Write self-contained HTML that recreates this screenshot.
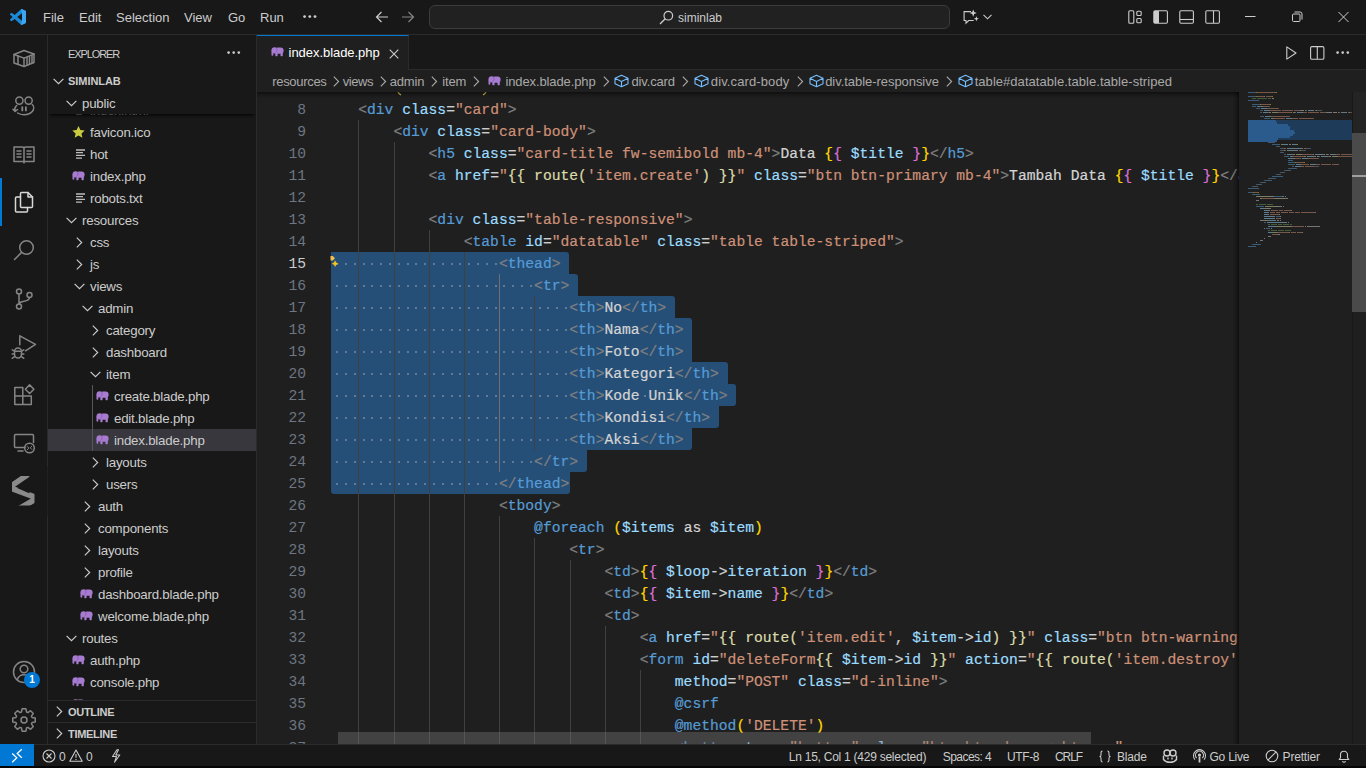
<!DOCTYPE html>
<html><head><meta charset="utf-8">
<style>
*{margin:0;padding:0;box-sizing:border-box}
html,body{width:1366px;height:768px;overflow:hidden;background:#1f1f1f;font-family:"Liberation Sans",sans-serif;color:#cccccc}
.a{position:absolute}
svg{position:absolute;overflow:visible}
#title{position:absolute;left:0;top:0;width:1366px;height:35px;background:#181818;border-bottom:1px solid #2b2b2b}
.menu{position:absolute;top:10px;font-size:13px;color:#cccccc;line-height:15px;white-space:nowrap}
#cmd{position:absolute;left:429px;top:5px;width:521px;height:24px;border:1px solid #3c3c3c;border-radius:6px;background:#212121}
#act{position:absolute;left:0;top:35px;width:48px;height:709px;background:#181818;border-right:1px solid #2b2b2b}
#side{position:absolute;left:48px;top:35px;width:209px;height:709px;background:#181818;border-right:1px solid #2b2b2b;overflow:hidden}
#tabs{position:absolute;left:257px;top:35px;width:1109px;height:35px;background:#181818;border-bottom:1px solid #2b2b2b}
#tab1{position:absolute;left:0;top:0;width:152px;height:35px;background:#1f1f1f;border-top:1px solid #0078d4;border-right:1px solid #2b2b2b}
#crumbs{position:absolute;left:257px;top:70px;width:1109px;height:22px;background:#1f1f1f;font-size:13px;color:#a9a9a9;letter-spacing:0.1px}
.cr{position:absolute;top:4px;line-height:15px;white-space:nowrap}
#editor{position:absolute;left:257px;top:92px;width:1109px;height:652px;background:#1f1f1f;overflow:hidden}
.cl{position:absolute;left:68px;height:22px;line-height:22px;white-space:pre;font-family:"Liberation Mono",monospace;font-size:14.67px;-webkit-text-stroke:0.2px}
.ln{position:absolute;left:0;width:49px;text-align:right;height:22px;line-height:22px;font-family:"Liberation Mono",monospace;font-size:14.67px;color:#6e7681}
.ln.act{color:#cccccc}
.sel{position:absolute;background:#264f78}
.ig{position:absolute;width:1px;background:#404040}
.ws{position:absolute;width:2px;height:2px;background:#5e7a98}
#status{position:absolute;left:0;top:744px;width:1366px;height:22px;background:#181818;border-top:1px solid #2b2b2b;font-size:12px;color:#cccccc}
#blackbar{position:absolute;left:0;top:766px;width:1366px;height:2px;background:#050505}
.si{position:absolute;top:6px;line-height:13px;white-space:nowrap}
.tr{position:absolute;font-size:13.3px;letter-spacing:-0.22px;line-height:22px;height:22px;white-space:nowrap;color:#cccccc}
.hdr{position:absolute;left:0;width:208px;height:22px;border-top:1px solid #2b2b2b;background:#181818}
.mm{position:absolute;height:1px}
</style></head><body>
<!-- ============ TITLE BAR ============ -->
<div id="title">
  <svg style="left:10px;top:9px" width="16" height="16" viewBox="0 0 100 100"><path fill="#1a8ad8" d="M96.46 10.8L75.86.87a6.23 6.23 0 0 0-7.1 1.2L29.35 38.04 12.18 25a4.16 4.16 0 0 0-5.31.24L1.36 30.25a4.16 4.16 0 0 0 0 6.16L16.25 50 1.36 63.58a4.16 4.16 0 0 0 0 6.16l5.51 5.01a4.16 4.16 0 0 0 5.31.24l17.17-13.04 39.41 35.96a6.22 6.22 0 0 0 7.1 1.2l20.6-9.91a6.25 6.25 0 0 0 3.54-5.63V16.43a6.25 6.25 0 0 0-3.54-5.63zM75.02 72.7L45.11 50l29.91-22.7z"/><path fill="#3ca6f0" d="M96.46 10.8L75.86.87a6.23 6.23 0 0 0-7.1 1.2L68.76 2.07 75.02 27.3V72.7L68.76 97.93a6.22 6.22 0 0 0 7.1 1.2l20.6-9.91a6.25 6.25 0 0 0 3.54-5.63V16.43a6.25 6.25 0 0 0-3.54-5.63z"/></svg>
  <div class="menu" style="left:43px">File</div>
  <div class="menu" style="left:79px">Edit</div>
  <div class="menu" style="left:116px">Selection</div>
  <div class="menu" style="left:184px">View</div>
  <div class="menu" style="left:228px">Go</div>
  <div class="menu" style="left:260px">Run</div>
  <svg style="left:303px;top:15px" width="14" height="4"><circle cx="1.6" cy="1.6" r="1.4" fill="#cccccc"/><circle cx="6.8" cy="1.6" r="1.4" fill="#cccccc"/><circle cx="12" cy="1.6" r="1.4" fill="#cccccc"/></svg>
  <!-- back / forward -->
  <svg style="left:375px;top:11px" width="14" height="12" viewBox="0 0 14 12"><path d="M13 6H1.5M6.5 1L1.5 6l5 5" fill="none" stroke="#cccccc" stroke-width="1.2"/></svg>
  <svg style="left:401px;top:11px" width="14" height="12" viewBox="0 0 14 12"><path d="M1 6h11.5M7.5 1l5 5-5 5" fill="none" stroke="#858585" stroke-width="1.2"/></svg>
  <div id="cmd"></div>
  <svg style="left:659px;top:10px" width="15" height="15" viewBox="0 0 15 15"><circle cx="9.3" cy="5.7" r="4.3" fill="none" stroke="#cccccc" stroke-width="1.2"/><path d="M6.2 8.8L1 14" stroke="#cccccc" stroke-width="1.3"/></svg>
  <div class="menu" style="left:678px;top:11px;font-size:12px;color:#cccccc">siminlab</div>
  <!-- copilot chat -->
  <svg style="left:963px;top:9px" width="17" height="16" viewBox="0 0 17 16"><path d="M8 2.6H1.1v8.9h1.9v2.6l2.7-2.6h5" fill="none" stroke="#cccccc" stroke-width="1.1"/><path d="M10.2 0.5l1 2.6 2.6 1-2.6 1-1 2.6-1-2.6-2.6-1 2.6-1z" fill="#cccccc"/><path d="M13.4 7.3l.7 1.8 1.8.7-1.8.7-.7 1.8-.7-1.8-1.8-.7 1.8-.7z" fill="#cccccc"/></svg>
  <svg style="left:983px;top:14px" width="9" height="6" viewBox="0 0 9 6"><path d="M.5 .8l4 4 4-4" fill="none" stroke="#cccccc" stroke-width="1.1"/></svg>
  <!-- layout icons -->
  <svg style="left:1128px;top:10px" width="15" height="14" viewBox="0 0 15 14"><rect x="0.8" y="0.8" width="5" height="12.4" rx="1" fill="none" stroke="#cccccc" stroke-width="1.1"/><rect x="8.8" y="1.3" width="4.4" height="4.2" rx="1" fill="none" stroke="#cccccc" stroke-width="1.1"/><rect x="8.8" y="8.5" width="4.4" height="4.2" rx="1" fill="none" stroke="#cccccc" stroke-width="1.1"/></svg>
  <svg style="left:1153px;top:10px" width="16" height="14" viewBox="0 0 16 14"><rect x="0.8" y="0.8" width="13.6" height="12.4" rx="1.2" fill="none" stroke="#cccccc" stroke-width="1.1"/><rect x="1" y="1" width="5" height="12" fill="#cccccc"/></svg>
  <svg style="left:1179px;top:10px" width="16" height="14" viewBox="0 0 16 14"><rect x="0.8" y="0.8" width="13.6" height="12.4" rx="1.2" fill="none" stroke="#cccccc" stroke-width="1.1"/><path d="M1 9.5h13.4" stroke="#cccccc" stroke-width="1.1"/></svg>
  <svg style="left:1205px;top:10px" width="16" height="14" viewBox="0 0 16 14"><rect x="0.8" y="0.8" width="13.6" height="12.4" rx="1.2" fill="none" stroke="#cccccc" stroke-width="1.1"/><path d="M8.5 1v12" stroke="#cccccc" stroke-width="1.1"/></svg>
  <!-- window controls -->
  <svg style="left:1245px;top:16px" width="11" height="2"><rect x="0" y="0" width="10.5" height="1" fill="#cccccc"/></svg>
  <svg style="left:1292px;top:11px" width="11" height="12" viewBox="0 0 11 12"><rect x="0.5" y="3" width="7.5" height="7.5" rx="1" fill="none" stroke="#cccccc" stroke-width="1"/><path d="M2.5 1h5.5a2 2 0 0 1 2 2v5.5" fill="none" stroke="#cccccc" stroke-width="1"/></svg>
  <svg style="left:1338px;top:12px" width="11" height="10" viewBox="0 0 11 10"><path d="M.5 0L10.5 10M10.5 0L.5 10" stroke="#cccccc" stroke-width="1"/></svg>
</div>

<!-- ============ ACTIVITY BAR ============ -->
<div id="act">
<svg style="left:12.0px;top:11.0px" width="24" height="24" viewBox="0 0 24 24" fill="none" stroke="#858585" stroke-width="1.5" stroke-linejoin="round" stroke-linecap="round"><path d="M2 8.5l10-4 10 3.5v8.5l-10 4-10-3.5z"/><path d="M2 8.5l10 3.6 10-4"/><path d="M12 12.1v8.4"/><path d="M6 10v8M15 11.5v7M17.5 10.5v7M20 9.6v7"/></svg>
<svg style="left:12.0px;top:59.0px" width="24" height="24" viewBox="0 0 24 24" fill="none" stroke="#858585" stroke-width="1.5" stroke-linejoin="round" stroke-linecap="round"><circle cx="7.4" cy="6.6" r="3.6"/><circle cx="16.6" cy="6.6" r="3.6"/><path d="M20.2 10.5c1.8 1.5 2 4.5.3 6.8-1.8 2.4-5 3.4-8.5 3.4-2.6 0-4.8-.6-6.4-1.7"/><path d="M10.3 13.2v3.2M13.9 13.2v3.2" stroke-width="1.8"/><path d="M4.6 11.5c-1.6 1.4-2.3 3.4-1.6 5.6M1 15.2l2.1 2.3 2.4-2"/></svg>
<svg style="left:12.0px;top:108.0px" width="24" height="24" viewBox="0 0 24 24" fill="none" stroke="#858585" stroke-width="1.5" stroke-linejoin="round" stroke-linecap="round"><path d="M2 4h8.5c.9 0 1.5.6 1.5 1.5V20M22 4h-8.5c-.9 0-1.5.6-1.5 1.5M2 4v14.5h10M22 4v14.5H12"/><path d="M5 8h4M5 11h4M5 14h4M15 8h4M15 11h4M15 14h4"/></svg>
<div class="a" style="left:0;top:143px;width:2px;height:48px;background:#0078d4"></div>
<svg style="left:12.0px;top:155.0px" width="24" height="24" viewBox="0 0 24 24" fill="none" stroke="#d7d7d7" stroke-width="1.5" stroke-linejoin="round" stroke-linecap="round"><path d="M9.5 2.5h6.5l4.5 4.5v9.5a1 1 0 0 1-1 1H9.5a1 1 0 0 1-1-1v-13a1 1 0 0 1 1-1z"/><path d="M16 2.5V7h4.5"/><path d="M8.5 7H4.5a1 1 0 0 0-1 1v13a1 1 0 0 0 1 1h10a1 1 0 0 0 1-1v-3.5"/></svg>
<svg style="left:12.0px;top:203.0px" width="24" height="24" viewBox="0 0 24 24" fill="none" stroke="#858585" stroke-width="1.5" stroke-linejoin="round" stroke-linecap="round"><circle cx="14.5" cy="9.5" r="6.8"/><path d="M9.6 14.4L2.5 21.5"/></svg>
<svg style="left:12.0px;top:252.0px" width="24" height="24" viewBox="0 0 24 24" fill="none" stroke="#858585" stroke-width="1.5" stroke-linejoin="round" stroke-linecap="round"><circle cx="7" cy="4.5" r="2.5"/><circle cx="7" cy="19.5" r="2.5"/><circle cx="17.5" cy="8" r="2.5"/><path d="M7 7v10M17.5 10.5c0 3-3 3.5-6.5 4S7.5 16 7.5 17"/></svg>
<svg style="left:12.0px;top:300.0px" width="24" height="24" viewBox="0 0 24 24" fill="none" stroke="#858585" stroke-width="1.5" stroke-linejoin="round" stroke-linecap="round"><path d="M7.8 0.8v9M7.8 0.8l15.7 8.5-10 6.5"/><path d="M2.5 16.5c0-2 1.6-3.6 3.5-3.6s3.5 1.6 3.5 3.6v2.8c0 2-1.6 3.6-3.5 3.6s-3.5-1.6-3.5-3.6z"/><path d="M2.5 16.3h7M0.2 14.8l2.3 1.3M11.8 14.8l-2.3 1.3M0.2 19h2.3M9.5 19h2.3M0.2 23.3l2.3-1.7M11.8 23.3l-2.3-1.7"/></svg>
<svg style="left:12.0px;top:348.0px" width="24" height="24" viewBox="0 0 24 24" fill="none" stroke="#858585" stroke-width="1.5" stroke-linejoin="round" stroke-linecap="round"><path d="M2.8 4.5h8v8.5h-8zM2.8 13h8v8.5h-8zM10.8 13h8.5v8.5h-8.5z"/><path d="M13.3 6.2l4.3-4.3 4.3 4.3-4.3 4.3z"/></svg>
<svg style="left:12.0px;top:396.0px" width="24" height="24" viewBox="0 0 24 24" fill="none" stroke="#858585" stroke-width="1.5" stroke-linejoin="round" stroke-linecap="round"><path d="M13 16.5H3.5a1 1 0 0 1-1-1v-11a1 1 0 0 1 1-1h17a1 1 0 0 1 1 1v7"/><path d="M6 20h5"/><circle cx="17.5" cy="17" r="4.8"/><path d="M15.3 15.5l1.6 1.6-1.6 1.6M19.8 15.2l-1.6 1.6 1.6 1.6" stroke-width="1"/></svg>
<svg style="left:0;top:0" width="48" height="709"><g transform="translate(0,-35)"><path d="M28 474.5L9 487.5 37.5 498 17 510" fill="none" stroke="#8a8a8a" stroke-width="5.6" stroke-linejoin="miter" stroke-miterlimit="4"/><path d="M18 487.5L29.5 492.5" stroke="#181818" stroke-width="1.4"/><rect x="0" y="466" width="12" height="50" fill="#181818"/><rect x="34.5" y="466" width="13" height="50" fill="#181818"/><rect x="0" y="462" width="47" height="14" fill="#181818"/><rect x="0" y="505.5" width="47" height="12" fill="#181818"/></g></svg>
<svg style="left:12.0px;top:625.0px" width="24" height="24" viewBox="0 0 24 24" fill="none" stroke="#858585" stroke-width="1.5" stroke-linejoin="round" stroke-linecap="round"><circle cx="12" cy="12" r="10.5"/><circle cx="12" cy="9" r="3.8"/><path d="M5.3 19.8c1-3.3 3.5-5 6.7-5s5.7 1.7 6.7 5"/></svg>
<div class="a" style="left:24px;top:637px;width:16px;height:16px;border-radius:8px;background:#0078d4;color:#fff;font-size:10px;font-weight:bold;line-height:16px;text-align:center">1</div>
<svg style="left:12.0px;top:673.0px" width="24" height="24" viewBox="0 0 24 24" fill="none" stroke="#858585" stroke-width="1.5" stroke-linejoin="round" stroke-linecap="round"><path d="M23.24 10.07 L23.24 13.93 L20.02 14.48 L19.43 15.92 L21.31 18.58 L18.58 21.31 L15.92 19.43 L14.48 20.02 L13.93 23.24 L10.07 23.24 L9.52 20.02 L8.08 19.43 L5.42 21.31 L2.69 18.58 L4.57 15.92 L3.98 14.48 L0.76 13.93 L0.76 10.07 L3.98 9.52 L4.57 8.08 L2.69 5.42 L5.42 2.69 L8.08 4.57 L9.52 3.98 L10.07 0.76 L13.93 0.76 L14.48 3.98 L15.92 4.57 L18.58 2.69 L21.31 5.42 L19.43 8.08 L20.02 9.52z"/><circle cx="12" cy="12" r="3"/></svg>
</div>

<!-- ============ SIDEBAR ============ -->
<div id="side">
<div class="a" style="left:20px;top:13px;font-size:11px;line-height:13px;color:#cccccc;letter-spacing:-1.1px">EXPLORER</div>
<svg style="left:179px;top:16px" width="14" height="4"><circle cx="1.6" cy="1.6" r="1.3" fill="#cccccc"/><circle cx="6.7" cy="1.6" r="1.3" fill="#cccccc"/><circle cx="11.8" cy="1.6" r="1.3" fill="#cccccc"/></svg>
<svg style="left:5.0px;top:43.0px" width="11" height="7" viewBox="0 0 11 7"><path d="M.6 .8L5.5 5.7 10.4 .8" fill="none" stroke="#cccccc" stroke-width="1.15"/></svg>
<div class="a" style="left:20px;top:40px;font-size:11px;line-height:13px;font-weight:bold;color:#cccccc;letter-spacing:-0.05px">SIMINLAB</div>
<div class="a" style="left:0;top:394px;width:208px;height:22px;background:#37373d"></div>
<div class="a" style="left:44px;top:350px;width:1px;height:66px;background:#585858"></div>
<svg style="left:27.5px;top:69.5px" width="10" height="10" viewBox="0 0 10 10"><path d="M0 1h9M0 3.7h7M0 6.4h9M0 9.1h6" stroke="#bdbdbd" stroke-width="1.3"/></svg>
<div class="tr" style="left:42.0px;top:65px;color:#cccccc">index.html</div>
<svg style="left:24.0px;top:91.0px" width="13" height="12" viewBox="0 0 13 12"><path fill="#cbcb41" d="M6.5 0l1.9 4 4.3.5-3.2 2.9.9 4.3-3.9-2.2-3.8 2.2.9-4.3L.3 4.5 4.6 4z"/></svg>
<div class="tr" style="left:42.0px;top:87px;color:#cccccc">favicon.ico</div>
<svg style="left:27.5px;top:113.5px" width="10" height="10" viewBox="0 0 10 10"><path d="M0 1h9M0 3.7h7M0 6.4h9M0 9.1h6" stroke="#bdbdbd" stroke-width="1.3"/></svg>
<div class="tr" style="left:42.0px;top:109px;color:#cccccc">hot</div>
<svg style="left:23.5px;top:136px" width="13" height="10" viewBox="0 0 13 10"><g fill="#a77bd0"><circle cx="3.6" cy="3.3" r="3.1"/><rect x="4" y="0.6" width="8.6" height="6.2" rx="3"/><rect x="4.3" y="5" width="2.3" height="4.2" rx="0.6"/><rect x="9.5" y="5" width="2.3" height="4.2" rx="0.6"/><rect x="0.5" y="3.6" width="1.8" height="5.2" rx="0.8"/></g><path d="M5.6 1.2c.9 1.4.6 3.2-1.1 4.3" stroke="#7c58a6" stroke-width="0.8" fill="none"/></svg>
<div class="tr" style="left:42.0px;top:131px;color:#cccccc">index.php</div>
<svg style="left:27.5px;top:157.5px" width="10" height="10" viewBox="0 0 10 10"><path d="M0 1h9M0 3.7h7M0 6.4h9M0 9.1h6" stroke="#bdbdbd" stroke-width="1.3"/></svg>
<div class="tr" style="left:42.0px;top:153px;color:#cccccc">robots.txt</div>
<svg style="left:18.0px;top:182.0px" width="11" height="7" viewBox="0 0 11 7"><path d="M.6 .8L5.5 5.7 10.4 .8" fill="none" stroke="#cccccc" stroke-width="1.15"/></svg>
<div class="tr" style="left:34.0px;top:175px;color:#cccccc">resources</div>
<svg style="left:27.8px;top:202.0px" width="7" height="11" viewBox="0 0 7 11"><path d="M.8 .6L5.7 5.5 .8 10.4" fill="none" stroke="#cccccc" stroke-width="1.15"/></svg>
<div class="tr" style="left:42.0px;top:197px;color:#cccccc">css</div>
<svg style="left:27.8px;top:224.0px" width="7" height="11" viewBox="0 0 7 11"><path d="M.8 .6L5.7 5.5 .8 10.4" fill="none" stroke="#cccccc" stroke-width="1.15"/></svg>
<div class="tr" style="left:42.0px;top:219px;color:#cccccc">js</div>
<svg style="left:26.0px;top:248.0px" width="11" height="7" viewBox="0 0 11 7"><path d="M.6 .8L5.5 5.7 10.4 .8" fill="none" stroke="#cccccc" stroke-width="1.15"/></svg>
<div class="tr" style="left:42.0px;top:241px;color:#cccccc">views</div>
<svg style="left:34.0px;top:270.0px" width="11" height="7" viewBox="0 0 11 7"><path d="M.6 .8L5.5 5.7 10.4 .8" fill="none" stroke="#cccccc" stroke-width="1.15"/></svg>
<div class="tr" style="left:50.0px;top:263px;color:#cccccc">admin</div>
<svg style="left:43.8px;top:290.0px" width="7" height="11" viewBox="0 0 7 11"><path d="M.8 .6L5.7 5.5 .8 10.4" fill="none" stroke="#cccccc" stroke-width="1.15"/></svg>
<div class="tr" style="left:58.0px;top:285px;color:#cccccc">category</div>
<svg style="left:43.8px;top:312.0px" width="7" height="11" viewBox="0 0 7 11"><path d="M.8 .6L5.7 5.5 .8 10.4" fill="none" stroke="#cccccc" stroke-width="1.15"/></svg>
<div class="tr" style="left:58.0px;top:307px;color:#cccccc">dashboard</div>
<svg style="left:42.0px;top:336.0px" width="11" height="7" viewBox="0 0 11 7"><path d="M.6 .8L5.5 5.7 10.4 .8" fill="none" stroke="#cccccc" stroke-width="1.15"/></svg>
<div class="tr" style="left:58.0px;top:329px;color:#cccccc">item</div>
<svg style="left:47.5px;top:356px" width="13" height="10" viewBox="0 0 13 10"><g fill="#a77bd0"><circle cx="3.6" cy="3.3" r="3.1"/><rect x="4" y="0.6" width="8.6" height="6.2" rx="3"/><rect x="4.3" y="5" width="2.3" height="4.2" rx="0.6"/><rect x="9.5" y="5" width="2.3" height="4.2" rx="0.6"/><rect x="0.5" y="3.6" width="1.8" height="5.2" rx="0.8"/></g><path d="M5.6 1.2c.9 1.4.6 3.2-1.1 4.3" stroke="#7c58a6" stroke-width="0.8" fill="none"/></svg>
<div class="tr" style="left:66.0px;top:351px;color:#cccccc">create.blade.php</div>
<svg style="left:47.5px;top:378px" width="13" height="10" viewBox="0 0 13 10"><g fill="#a77bd0"><circle cx="3.6" cy="3.3" r="3.1"/><rect x="4" y="0.6" width="8.6" height="6.2" rx="3"/><rect x="4.3" y="5" width="2.3" height="4.2" rx="0.6"/><rect x="9.5" y="5" width="2.3" height="4.2" rx="0.6"/><rect x="0.5" y="3.6" width="1.8" height="5.2" rx="0.8"/></g><path d="M5.6 1.2c.9 1.4.6 3.2-1.1 4.3" stroke="#7c58a6" stroke-width="0.8" fill="none"/></svg>
<div class="tr" style="left:66.0px;top:373px;color:#cccccc">edit.blade.php</div>
<svg style="left:47.5px;top:400px" width="13" height="10" viewBox="0 0 13 10"><g fill="#a77bd0"><circle cx="3.6" cy="3.3" r="3.1"/><rect x="4" y="0.6" width="8.6" height="6.2" rx="3"/><rect x="4.3" y="5" width="2.3" height="4.2" rx="0.6"/><rect x="9.5" y="5" width="2.3" height="4.2" rx="0.6"/><rect x="0.5" y="3.6" width="1.8" height="5.2" rx="0.8"/></g><path d="M5.6 1.2c.9 1.4.6 3.2-1.1 4.3" stroke="#7c58a6" stroke-width="0.8" fill="none"/></svg>
<div class="tr" style="left:66.0px;top:395px;color:#cccccc">index.blade.php</div>
<svg style="left:43.8px;top:422.0px" width="7" height="11" viewBox="0 0 7 11"><path d="M.8 .6L5.7 5.5 .8 10.4" fill="none" stroke="#cccccc" stroke-width="1.15"/></svg>
<div class="tr" style="left:58.0px;top:417px;color:#cccccc">layouts</div>
<svg style="left:43.8px;top:444.0px" width="7" height="11" viewBox="0 0 7 11"><path d="M.8 .6L5.7 5.5 .8 10.4" fill="none" stroke="#cccccc" stroke-width="1.15"/></svg>
<div class="tr" style="left:58.0px;top:439px;color:#cccccc">users</div>
<svg style="left:35.8px;top:466.0px" width="7" height="11" viewBox="0 0 7 11"><path d="M.8 .6L5.7 5.5 .8 10.4" fill="none" stroke="#cccccc" stroke-width="1.15"/></svg>
<div class="tr" style="left:50.0px;top:461px;color:#cccccc">auth</div>
<svg style="left:35.8px;top:488.0px" width="7" height="11" viewBox="0 0 7 11"><path d="M.8 .6L5.7 5.5 .8 10.4" fill="none" stroke="#cccccc" stroke-width="1.15"/></svg>
<div class="tr" style="left:50.0px;top:483px;color:#cccccc">components</div>
<svg style="left:35.8px;top:510.0px" width="7" height="11" viewBox="0 0 7 11"><path d="M.8 .6L5.7 5.5 .8 10.4" fill="none" stroke="#cccccc" stroke-width="1.15"/></svg>
<div class="tr" style="left:50.0px;top:505px;color:#cccccc">layouts</div>
<svg style="left:35.8px;top:532.0px" width="7" height="11" viewBox="0 0 7 11"><path d="M.8 .6L5.7 5.5 .8 10.4" fill="none" stroke="#cccccc" stroke-width="1.15"/></svg>
<div class="tr" style="left:50.0px;top:527px;color:#cccccc">profile</div>
<svg style="left:31.5px;top:554px" width="13" height="10" viewBox="0 0 13 10"><g fill="#a77bd0"><circle cx="3.6" cy="3.3" r="3.1"/><rect x="4" y="0.6" width="8.6" height="6.2" rx="3"/><rect x="4.3" y="5" width="2.3" height="4.2" rx="0.6"/><rect x="9.5" y="5" width="2.3" height="4.2" rx="0.6"/><rect x="0.5" y="3.6" width="1.8" height="5.2" rx="0.8"/></g><path d="M5.6 1.2c.9 1.4.6 3.2-1.1 4.3" stroke="#7c58a6" stroke-width="0.8" fill="none"/></svg>
<div class="tr" style="left:50.0px;top:549px;color:#cccccc">dashboard.blade.php</div>
<svg style="left:31.5px;top:576px" width="13" height="10" viewBox="0 0 13 10"><g fill="#a77bd0"><circle cx="3.6" cy="3.3" r="3.1"/><rect x="4" y="0.6" width="8.6" height="6.2" rx="3"/><rect x="4.3" y="5" width="2.3" height="4.2" rx="0.6"/><rect x="9.5" y="5" width="2.3" height="4.2" rx="0.6"/><rect x="0.5" y="3.6" width="1.8" height="5.2" rx="0.8"/></g><path d="M5.6 1.2c.9 1.4.6 3.2-1.1 4.3" stroke="#7c58a6" stroke-width="0.8" fill="none"/></svg>
<div class="tr" style="left:50.0px;top:571px;color:#cccccc">welcome.blade.php</div>
<svg style="left:18.0px;top:600.0px" width="11" height="7" viewBox="0 0 11 7"><path d="M.6 .8L5.5 5.7 10.4 .8" fill="none" stroke="#cccccc" stroke-width="1.15"/></svg>
<div class="tr" style="left:34.0px;top:593px;color:#cccccc">routes</div>
<svg style="left:23.5px;top:620px" width="13" height="10" viewBox="0 0 13 10"><g fill="#a77bd0"><circle cx="3.6" cy="3.3" r="3.1"/><rect x="4" y="0.6" width="8.6" height="6.2" rx="3"/><rect x="4.3" y="5" width="2.3" height="4.2" rx="0.6"/><rect x="9.5" y="5" width="2.3" height="4.2" rx="0.6"/><rect x="0.5" y="3.6" width="1.8" height="5.2" rx="0.8"/></g><path d="M5.6 1.2c.9 1.4.6 3.2-1.1 4.3" stroke="#7c58a6" stroke-width="0.8" fill="none"/></svg>
<div class="tr" style="left:42.0px;top:615px;color:#cccccc">auth.php</div>
<svg style="left:23.5px;top:642px" width="13" height="10" viewBox="0 0 13 10"><g fill="#a77bd0"><circle cx="3.6" cy="3.3" r="3.1"/><rect x="4" y="0.6" width="8.6" height="6.2" rx="3"/><rect x="4.3" y="5" width="2.3" height="4.2" rx="0.6"/><rect x="9.5" y="5" width="2.3" height="4.2" rx="0.6"/><rect x="0.5" y="3.6" width="1.8" height="5.2" rx="0.8"/></g><path d="M5.6 1.2c.9 1.4.6 3.2-1.1 4.3" stroke="#7c58a6" stroke-width="0.8" fill="none"/></svg>
<div class="tr" style="left:42.0px;top:637px;color:#cccccc">console.php</div>
<svg style="left:23.5px;top:664px" width="13" height="10" viewBox="0 0 13 10"><g fill="#a77bd0"><circle cx="3.6" cy="3.3" r="3.1"/><rect x="4" y="0.6" width="8.6" height="6.2" rx="3"/><rect x="4.3" y="5" width="2.3" height="4.2" rx="0.6"/><rect x="9.5" y="5" width="2.3" height="4.2" rx="0.6"/><rect x="0.5" y="3.6" width="1.8" height="5.2" rx="0.8"/></g><path d="M5.6 1.2c.9 1.4.6 3.2-1.1 4.3" stroke="#7c58a6" stroke-width="0.8" fill="none"/></svg>
<div class="tr" style="left:42.0px;top:659px;color:#cccccc">web.php</div>
<div class="a" style="left:0;top:57px;width:208px;height:22px;background:#181818;box-shadow:0 3px 3px -2px #000"></div>
<svg style="left:18.0px;top:65.0px" width="11" height="7" viewBox="0 0 11 7"><path d="M.6 .8L5.5 5.7 10.4 .8" fill="none" stroke="#cccccc" stroke-width="1.15"/></svg>
<div class="tr" style="left:34.0px;top:58px;">public</div>
<div class="hdr" style="top:665px"></div>
<svg style="left:8.0px;top:671.0px" width="7" height="11" viewBox="0 0 7 11"><path d="M.8 .6L5.7 5.5 .8 10.4" fill="none" stroke="#cccccc" stroke-width="1.15"/></svg>
<div class="a" style="left:20px;top:671px;font-size:11px;line-height:13px;font-weight:bold;color:#cccccc;letter-spacing:-0.3px">OUTLINE</div>
<div class="hdr" style="top:687px;height:22px"></div>
<svg style="left:8.0px;top:693.0px" width="7" height="11" viewBox="0 0 7 11"><path d="M.8 .6L5.7 5.5 .8 10.4" fill="none" stroke="#cccccc" stroke-width="1.15"/></svg>
<div class="a" style="left:20px;top:693px;font-size:11px;line-height:13px;font-weight:bold;color:#cccccc;letter-spacing:-0.3px">TIMELINE</div>
</div>

<!-- ============ TABS ============ -->
<div id="tabs">
  <div id="tab1">
    <svg style="left:13.9px;top:11px" width="13" height="10" viewBox="0 0 13 10"><g fill="#a77bd0"><circle cx="3.6" cy="3.3" r="3.1"/><rect x="4" y="0.6" width="8.6" height="6.2" rx="3"/><rect x="4.3" y="5" width="2.3" height="4.2" rx="0.6"/><rect x="9.5" y="5" width="2.3" height="4.2" rx="0.6"/><rect x="0.5" y="3.6" width="1.8" height="5.2" rx="0.8"/></g><path d="M5.6 1.2c.9 1.4.6 3.2-1.1 4.3" stroke="#7c58a6" stroke-width="0.8" fill="none"/></svg>
    <span class="a" style="left:31.6px;top:9px;font-size:13px;line-height:15px;color:#ffffff;letter-spacing:-0.05px">index.blade.php</span>
    <svg style="left:132px;top:13px" width="10" height="10" viewBox="0 0 10 10"><path d="M.7 .7l8.6 8.6M9.3 .7L.7 9.3" stroke="#cccccc" stroke-width="1.1"/></svg>
  </div>
  <svg style="left:1029px;top:11px" width="11" height="14" viewBox="0 0 11 14"><path d="M.8 .9v12.2L10 7z" fill="none" stroke="#cccccc" stroke-width="1.1" stroke-linejoin="round"/></svg>
  <svg style="left:1053px;top:11px" width="15" height="14" viewBox="0 0 15 14"><rect x="0.6" y="0.6" width="13.3" height="12.6" rx="1.3" fill="none" stroke="#cccccc" stroke-width="1.1"/><path d="M7.3 1v12" stroke="#cccccc" stroke-width="1.1"/></svg>
  <svg style="left:1079px;top:16px" width="14" height="4"><circle cx="1.6" cy="1.6" r="1.3" fill="#cccccc"/><circle cx="6.7" cy="1.6" r="1.3" fill="#cccccc"/><circle cx="11.8" cy="1.6" r="1.3" fill="#cccccc"/></svg>
</div>

<!-- ============ BREADCRUMBS ============ -->
<div id="crumbs">
<div class="cr" style="left:15.2px;letter-spacing:-0.3px">resources</div>
<svg style="left:75.8px;top:6px" width="7" height="11" viewBox="0 0 7 11"><path d="M.8 .7L5.6 5.5 .8 10.3" fill="none" stroke="#a9a9a9" stroke-width="1.1"/></svg>
<div class="cr" style="left:85.8px;letter-spacing:-0.45px">views</div>
<svg style="left:122.6px;top:6px" width="7" height="11" viewBox="0 0 7 11"><path d="M.8 .7L5.6 5.5 .8 10.3" fill="none" stroke="#a9a9a9" stroke-width="1.1"/></svg>
<div class="cr" style="left:132.8px;letter-spacing:-0.2px">admin</div>
<svg style="left:174.0px;top:6px" width="7" height="11" viewBox="0 0 7 11"><path d="M.8 .7L5.6 5.5 .8 10.3" fill="none" stroke="#a9a9a9" stroke-width="1.1"/></svg>
<div class="cr" style="left:185.2px;letter-spacing:-0.1px">item</div>
<svg style="left:215.5px;top:6px" width="7" height="11" viewBox="0 0 7 11"><path d="M.8 .7L5.6 5.5 .8 10.3" fill="none" stroke="#a9a9a9" stroke-width="1.1"/></svg>
<svg style="left:231px;top:5.5px" width="13" height="10" viewBox="0 0 13 10"><g fill="#a77bd0"><circle cx="3.6" cy="3.3" r="3.1"/><rect x="4" y="0.6" width="8.6" height="6.2" rx="3"/><rect x="4.3" y="5" width="2.3" height="4.2" rx="0.6"/><rect x="9.5" y="5" width="2.3" height="4.2" rx="0.6"/><rect x="0.5" y="3.6" width="1.8" height="5.2" rx="0.8"/></g><path d="M5.6 1.2c.9 1.4.6 3.2-1.1 4.3" stroke="#7c58a6" stroke-width="0.8" fill="none"/></svg>
<div class="cr" style="left:248.4px;letter-spacing:-0.11px">index.blade.php</div>
<svg style="left:345.5px;top:6px" width="7" height="11" viewBox="0 0 7 11"><path d="M.8 .7L5.6 5.5 .8 10.3" fill="none" stroke="#a9a9a9" stroke-width="1.1"/></svg>
<svg style="left:357.0px;top:4px" width="15" height="14" viewBox="0 0 15 14"><path d="M1 4.3L7.5 1.2 14 4.3v5.4L7.5 12.8 1 9.7z M1 4.3l6.5 3.1L14 4.3 M7.5 7.4v5.4" fill="none" stroke="#75beff" stroke-width="1.1" stroke-linejoin="round"/></svg>
<div class="cr" style="left:374.5px;letter-spacing:-0.16px">div.card</div>
<svg style="left:424.5px;top:6px" width="7" height="11" viewBox="0 0 7 11"><path d="M.8 .7L5.6 5.5 .8 10.3" fill="none" stroke="#a9a9a9" stroke-width="1.1"/></svg>
<svg style="left:436.5px;top:4px" width="15" height="14" viewBox="0 0 15 14"><path d="M1 4.3L7.5 1.2 14 4.3v5.4L7.5 12.8 1 9.7z M1 4.3l6.5 3.1L14 4.3 M7.5 7.4v5.4" fill="none" stroke="#75beff" stroke-width="1.1" stroke-linejoin="round"/></svg>
<div class="cr" style="left:453.8px;letter-spacing:0.12px">div.card-body</div>
<svg style="left:539.5px;top:6px" width="7" height="11" viewBox="0 0 7 11"><path d="M.8 .7L5.6 5.5 .8 10.3" fill="none" stroke="#a9a9a9" stroke-width="1.1"/></svg>
<svg style="left:551.5px;top:4px" width="15" height="14" viewBox="0 0 15 14"><path d="M1 4.3L7.5 1.2 14 4.3v5.4L7.5 12.8 1 9.7z M1 4.3l6.5 3.1L14 4.3 M7.5 7.4v5.4" fill="none" stroke="#75beff" stroke-width="1.1" stroke-linejoin="round"/></svg>
<div class="cr" style="left:568.2px;letter-spacing:-0.05px">div.table-responsive</div>
<svg style="left:689.0px;top:6px" width="7" height="11" viewBox="0 0 7 11"><path d="M.8 .7L5.6 5.5 .8 10.3" fill="none" stroke="#a9a9a9" stroke-width="1.1"/></svg>
<svg style="left:701.4px;top:4px" width="15" height="14" viewBox="0 0 15 14"><path d="M1 4.3L7.5 1.2 14 4.3v5.4L7.5 12.8 1 9.7z M1 4.3l6.5 3.1L14 4.3 M7.5 7.4v5.4" fill="none" stroke="#75beff" stroke-width="1.1" stroke-linejoin="round"/></svg>
<div class="cr" style="left:717.7px;letter-spacing:0.04px">table#datatable.table.table-striped</div>
</div>

<!-- ============ EDITOR ============ -->
<div id="editor">
<div class="sel" style="left:74px;top:160px;width:238.1px;height:22px;border-radius:0 3px 0 0"></div>
<div class="sel" style="left:74px;top:182px;width:246.9px;height:22px;border-radius:0 3px 0 0"></div>
<div class="sel" style="left:74px;top:204px;width:343.7px;height:22px;border-radius:0 3px 0 0"></div>
<div class="sel" style="left:74px;top:226px;width:361.3px;height:22px;border-radius:0 3px 0 0"></div>
<div class="sel" style="left:74px;top:248px;width:361.3px;height:22px;border-radius:0 0 0 0"></div>
<div class="sel" style="left:74px;top:270px;width:396.5px;height:22px;border-radius:0 3px 0 0"></div>
<div class="sel" style="left:74px;top:292px;width:405.3px;height:22px;border-radius:0 3px 3px 0"></div>
<div class="sel" style="left:74px;top:314px;width:387.7px;height:22px;border-radius:0 0 3px 0"></div>
<div class="sel" style="left:74px;top:336px;width:361.3px;height:22px;border-radius:0 0 3px 0"></div>
<div class="sel" style="left:74px;top:358px;width:255.7px;height:22px;border-radius:0 0 3px 0"></div>
<div class="sel" style="left:74px;top:380px;width:239.4px;height:22px;border-radius:0 0 3px 3px"></div>
<div class="ig" style="left:101.4px;top:28px;height:638px;background:#404040"></div>
<div class="ig" style="left:136.6px;top:50px;height:616px;background:#404040"></div>
<div class="ig" style="left:171.8px;top:138px;height:528px;background:#404040"></div>
<div class="ig" style="left:207.0px;top:160px;height:506px;background:#404040"></div>
<div class="ig" style="left:242.2px;top:182px;height:198px;background:#707070"></div>
<div class="ig" style="left:242.2px;top:424px;height:242px;background:#404040"></div>
<div class="ig" style="left:277.4px;top:204px;height:154px;background:#404040"></div>
<div class="ig" style="left:277.4px;top:446px;height:220px;background:#404040"></div>
<div class="ig" style="left:312.6px;top:468px;height:198px;background:#404040"></div>
<div class="ig" style="left:347.8px;top:534px;height:132px;background:#404040"></div>
<div class="ig" style="left:383.0px;top:578px;height:88px;background:#404040"></div>
<div class="ws" style="left:79.2px;top:171px"></div>
<div class="ws" style="left:88.0px;top:171px"></div>
<div class="ws" style="left:96.8px;top:171px"></div>
<div class="ws" style="left:105.6px;top:171px"></div>
<div class="ws" style="left:114.4px;top:171px"></div>
<div class="ws" style="left:123.2px;top:171px"></div>
<div class="ws" style="left:132.0px;top:171px"></div>
<div class="ws" style="left:140.8px;top:171px"></div>
<div class="ws" style="left:149.6px;top:171px"></div>
<div class="ws" style="left:158.4px;top:171px"></div>
<div class="ws" style="left:167.2px;top:171px"></div>
<div class="ws" style="left:176.0px;top:171px"></div>
<div class="ws" style="left:184.8px;top:171px"></div>
<div class="ws" style="left:193.6px;top:171px"></div>
<div class="ws" style="left:202.4px;top:171px"></div>
<div class="ws" style="left:211.2px;top:171px"></div>
<div class="ws" style="left:220.0px;top:171px"></div>
<div class="ws" style="left:228.8px;top:171px"></div>
<div class="ws" style="left:237.6px;top:171px"></div>
<div class="ws" style="left:79.2px;top:193px"></div>
<div class="ws" style="left:88.0px;top:193px"></div>
<div class="ws" style="left:96.8px;top:193px"></div>
<div class="ws" style="left:105.6px;top:193px"></div>
<div class="ws" style="left:114.4px;top:193px"></div>
<div class="ws" style="left:123.2px;top:193px"></div>
<div class="ws" style="left:132.0px;top:193px"></div>
<div class="ws" style="left:140.8px;top:193px"></div>
<div class="ws" style="left:149.6px;top:193px"></div>
<div class="ws" style="left:158.4px;top:193px"></div>
<div class="ws" style="left:167.2px;top:193px"></div>
<div class="ws" style="left:176.0px;top:193px"></div>
<div class="ws" style="left:184.8px;top:193px"></div>
<div class="ws" style="left:193.6px;top:193px"></div>
<div class="ws" style="left:202.4px;top:193px"></div>
<div class="ws" style="left:211.2px;top:193px"></div>
<div class="ws" style="left:220.0px;top:193px"></div>
<div class="ws" style="left:228.8px;top:193px"></div>
<div class="ws" style="left:237.6px;top:193px"></div>
<div class="ws" style="left:246.4px;top:193px"></div>
<div class="ws" style="left:255.2px;top:193px"></div>
<div class="ws" style="left:264.0px;top:193px"></div>
<div class="ws" style="left:272.8px;top:193px"></div>
<div class="ws" style="left:79.2px;top:215px"></div>
<div class="ws" style="left:88.0px;top:215px"></div>
<div class="ws" style="left:96.8px;top:215px"></div>
<div class="ws" style="left:105.6px;top:215px"></div>
<div class="ws" style="left:114.4px;top:215px"></div>
<div class="ws" style="left:123.2px;top:215px"></div>
<div class="ws" style="left:132.0px;top:215px"></div>
<div class="ws" style="left:140.8px;top:215px"></div>
<div class="ws" style="left:149.6px;top:215px"></div>
<div class="ws" style="left:158.4px;top:215px"></div>
<div class="ws" style="left:167.2px;top:215px"></div>
<div class="ws" style="left:176.0px;top:215px"></div>
<div class="ws" style="left:184.8px;top:215px"></div>
<div class="ws" style="left:193.6px;top:215px"></div>
<div class="ws" style="left:202.4px;top:215px"></div>
<div class="ws" style="left:211.2px;top:215px"></div>
<div class="ws" style="left:220.0px;top:215px"></div>
<div class="ws" style="left:228.8px;top:215px"></div>
<div class="ws" style="left:237.6px;top:215px"></div>
<div class="ws" style="left:246.4px;top:215px"></div>
<div class="ws" style="left:255.2px;top:215px"></div>
<div class="ws" style="left:264.0px;top:215px"></div>
<div class="ws" style="left:272.8px;top:215px"></div>
<div class="ws" style="left:281.6px;top:215px"></div>
<div class="ws" style="left:290.4px;top:215px"></div>
<div class="ws" style="left:299.2px;top:215px"></div>
<div class="ws" style="left:308.0px;top:215px"></div>
<div class="ws" style="left:79.2px;top:237px"></div>
<div class="ws" style="left:88.0px;top:237px"></div>
<div class="ws" style="left:96.8px;top:237px"></div>
<div class="ws" style="left:105.6px;top:237px"></div>
<div class="ws" style="left:114.4px;top:237px"></div>
<div class="ws" style="left:123.2px;top:237px"></div>
<div class="ws" style="left:132.0px;top:237px"></div>
<div class="ws" style="left:140.8px;top:237px"></div>
<div class="ws" style="left:149.6px;top:237px"></div>
<div class="ws" style="left:158.4px;top:237px"></div>
<div class="ws" style="left:167.2px;top:237px"></div>
<div class="ws" style="left:176.0px;top:237px"></div>
<div class="ws" style="left:184.8px;top:237px"></div>
<div class="ws" style="left:193.6px;top:237px"></div>
<div class="ws" style="left:202.4px;top:237px"></div>
<div class="ws" style="left:211.2px;top:237px"></div>
<div class="ws" style="left:220.0px;top:237px"></div>
<div class="ws" style="left:228.8px;top:237px"></div>
<div class="ws" style="left:237.6px;top:237px"></div>
<div class="ws" style="left:246.4px;top:237px"></div>
<div class="ws" style="left:255.2px;top:237px"></div>
<div class="ws" style="left:264.0px;top:237px"></div>
<div class="ws" style="left:272.8px;top:237px"></div>
<div class="ws" style="left:281.6px;top:237px"></div>
<div class="ws" style="left:290.4px;top:237px"></div>
<div class="ws" style="left:299.2px;top:237px"></div>
<div class="ws" style="left:308.0px;top:237px"></div>
<div class="ws" style="left:79.2px;top:259px"></div>
<div class="ws" style="left:88.0px;top:259px"></div>
<div class="ws" style="left:96.8px;top:259px"></div>
<div class="ws" style="left:105.6px;top:259px"></div>
<div class="ws" style="left:114.4px;top:259px"></div>
<div class="ws" style="left:123.2px;top:259px"></div>
<div class="ws" style="left:132.0px;top:259px"></div>
<div class="ws" style="left:140.8px;top:259px"></div>
<div class="ws" style="left:149.6px;top:259px"></div>
<div class="ws" style="left:158.4px;top:259px"></div>
<div class="ws" style="left:167.2px;top:259px"></div>
<div class="ws" style="left:176.0px;top:259px"></div>
<div class="ws" style="left:184.8px;top:259px"></div>
<div class="ws" style="left:193.6px;top:259px"></div>
<div class="ws" style="left:202.4px;top:259px"></div>
<div class="ws" style="left:211.2px;top:259px"></div>
<div class="ws" style="left:220.0px;top:259px"></div>
<div class="ws" style="left:228.8px;top:259px"></div>
<div class="ws" style="left:237.6px;top:259px"></div>
<div class="ws" style="left:246.4px;top:259px"></div>
<div class="ws" style="left:255.2px;top:259px"></div>
<div class="ws" style="left:264.0px;top:259px"></div>
<div class="ws" style="left:272.8px;top:259px"></div>
<div class="ws" style="left:281.6px;top:259px"></div>
<div class="ws" style="left:290.4px;top:259px"></div>
<div class="ws" style="left:299.2px;top:259px"></div>
<div class="ws" style="left:308.0px;top:259px"></div>
<div class="ws" style="left:79.2px;top:281px"></div>
<div class="ws" style="left:88.0px;top:281px"></div>
<div class="ws" style="left:96.8px;top:281px"></div>
<div class="ws" style="left:105.6px;top:281px"></div>
<div class="ws" style="left:114.4px;top:281px"></div>
<div class="ws" style="left:123.2px;top:281px"></div>
<div class="ws" style="left:132.0px;top:281px"></div>
<div class="ws" style="left:140.8px;top:281px"></div>
<div class="ws" style="left:149.6px;top:281px"></div>
<div class="ws" style="left:158.4px;top:281px"></div>
<div class="ws" style="left:167.2px;top:281px"></div>
<div class="ws" style="left:176.0px;top:281px"></div>
<div class="ws" style="left:184.8px;top:281px"></div>
<div class="ws" style="left:193.6px;top:281px"></div>
<div class="ws" style="left:202.4px;top:281px"></div>
<div class="ws" style="left:211.2px;top:281px"></div>
<div class="ws" style="left:220.0px;top:281px"></div>
<div class="ws" style="left:228.8px;top:281px"></div>
<div class="ws" style="left:237.6px;top:281px"></div>
<div class="ws" style="left:246.4px;top:281px"></div>
<div class="ws" style="left:255.2px;top:281px"></div>
<div class="ws" style="left:264.0px;top:281px"></div>
<div class="ws" style="left:272.8px;top:281px"></div>
<div class="ws" style="left:281.6px;top:281px"></div>
<div class="ws" style="left:290.4px;top:281px"></div>
<div class="ws" style="left:299.2px;top:281px"></div>
<div class="ws" style="left:308.0px;top:281px"></div>
<div class="ws" style="left:79.2px;top:303px"></div>
<div class="ws" style="left:88.0px;top:303px"></div>
<div class="ws" style="left:96.8px;top:303px"></div>
<div class="ws" style="left:105.6px;top:303px"></div>
<div class="ws" style="left:114.4px;top:303px"></div>
<div class="ws" style="left:123.2px;top:303px"></div>
<div class="ws" style="left:132.0px;top:303px"></div>
<div class="ws" style="left:140.8px;top:303px"></div>
<div class="ws" style="left:149.6px;top:303px"></div>
<div class="ws" style="left:158.4px;top:303px"></div>
<div class="ws" style="left:167.2px;top:303px"></div>
<div class="ws" style="left:176.0px;top:303px"></div>
<div class="ws" style="left:184.8px;top:303px"></div>
<div class="ws" style="left:193.6px;top:303px"></div>
<div class="ws" style="left:202.4px;top:303px"></div>
<div class="ws" style="left:211.2px;top:303px"></div>
<div class="ws" style="left:220.0px;top:303px"></div>
<div class="ws" style="left:228.8px;top:303px"></div>
<div class="ws" style="left:237.6px;top:303px"></div>
<div class="ws" style="left:246.4px;top:303px"></div>
<div class="ws" style="left:255.2px;top:303px"></div>
<div class="ws" style="left:264.0px;top:303px"></div>
<div class="ws" style="left:272.8px;top:303px"></div>
<div class="ws" style="left:281.6px;top:303px"></div>
<div class="ws" style="left:290.4px;top:303px"></div>
<div class="ws" style="left:299.2px;top:303px"></div>
<div class="ws" style="left:308.0px;top:303px"></div>
<div class="ws" style="left:387.2px;top:303px"></div>
<div class="ws" style="left:79.2px;top:325px"></div>
<div class="ws" style="left:88.0px;top:325px"></div>
<div class="ws" style="left:96.8px;top:325px"></div>
<div class="ws" style="left:105.6px;top:325px"></div>
<div class="ws" style="left:114.4px;top:325px"></div>
<div class="ws" style="left:123.2px;top:325px"></div>
<div class="ws" style="left:132.0px;top:325px"></div>
<div class="ws" style="left:140.8px;top:325px"></div>
<div class="ws" style="left:149.6px;top:325px"></div>
<div class="ws" style="left:158.4px;top:325px"></div>
<div class="ws" style="left:167.2px;top:325px"></div>
<div class="ws" style="left:176.0px;top:325px"></div>
<div class="ws" style="left:184.8px;top:325px"></div>
<div class="ws" style="left:193.6px;top:325px"></div>
<div class="ws" style="left:202.4px;top:325px"></div>
<div class="ws" style="left:211.2px;top:325px"></div>
<div class="ws" style="left:220.0px;top:325px"></div>
<div class="ws" style="left:228.8px;top:325px"></div>
<div class="ws" style="left:237.6px;top:325px"></div>
<div class="ws" style="left:246.4px;top:325px"></div>
<div class="ws" style="left:255.2px;top:325px"></div>
<div class="ws" style="left:264.0px;top:325px"></div>
<div class="ws" style="left:272.8px;top:325px"></div>
<div class="ws" style="left:281.6px;top:325px"></div>
<div class="ws" style="left:290.4px;top:325px"></div>
<div class="ws" style="left:299.2px;top:325px"></div>
<div class="ws" style="left:308.0px;top:325px"></div>
<div class="ws" style="left:79.2px;top:347px"></div>
<div class="ws" style="left:88.0px;top:347px"></div>
<div class="ws" style="left:96.8px;top:347px"></div>
<div class="ws" style="left:105.6px;top:347px"></div>
<div class="ws" style="left:114.4px;top:347px"></div>
<div class="ws" style="left:123.2px;top:347px"></div>
<div class="ws" style="left:132.0px;top:347px"></div>
<div class="ws" style="left:140.8px;top:347px"></div>
<div class="ws" style="left:149.6px;top:347px"></div>
<div class="ws" style="left:158.4px;top:347px"></div>
<div class="ws" style="left:167.2px;top:347px"></div>
<div class="ws" style="left:176.0px;top:347px"></div>
<div class="ws" style="left:184.8px;top:347px"></div>
<div class="ws" style="left:193.6px;top:347px"></div>
<div class="ws" style="left:202.4px;top:347px"></div>
<div class="ws" style="left:211.2px;top:347px"></div>
<div class="ws" style="left:220.0px;top:347px"></div>
<div class="ws" style="left:228.8px;top:347px"></div>
<div class="ws" style="left:237.6px;top:347px"></div>
<div class="ws" style="left:246.4px;top:347px"></div>
<div class="ws" style="left:255.2px;top:347px"></div>
<div class="ws" style="left:264.0px;top:347px"></div>
<div class="ws" style="left:272.8px;top:347px"></div>
<div class="ws" style="left:281.6px;top:347px"></div>
<div class="ws" style="left:290.4px;top:347px"></div>
<div class="ws" style="left:299.2px;top:347px"></div>
<div class="ws" style="left:308.0px;top:347px"></div>
<div class="ws" style="left:79.2px;top:369px"></div>
<div class="ws" style="left:88.0px;top:369px"></div>
<div class="ws" style="left:96.8px;top:369px"></div>
<div class="ws" style="left:105.6px;top:369px"></div>
<div class="ws" style="left:114.4px;top:369px"></div>
<div class="ws" style="left:123.2px;top:369px"></div>
<div class="ws" style="left:132.0px;top:369px"></div>
<div class="ws" style="left:140.8px;top:369px"></div>
<div class="ws" style="left:149.6px;top:369px"></div>
<div class="ws" style="left:158.4px;top:369px"></div>
<div class="ws" style="left:167.2px;top:369px"></div>
<div class="ws" style="left:176.0px;top:369px"></div>
<div class="ws" style="left:184.8px;top:369px"></div>
<div class="ws" style="left:193.6px;top:369px"></div>
<div class="ws" style="left:202.4px;top:369px"></div>
<div class="ws" style="left:211.2px;top:369px"></div>
<div class="ws" style="left:220.0px;top:369px"></div>
<div class="ws" style="left:228.8px;top:369px"></div>
<div class="ws" style="left:237.6px;top:369px"></div>
<div class="ws" style="left:246.4px;top:369px"></div>
<div class="ws" style="left:255.2px;top:369px"></div>
<div class="ws" style="left:264.0px;top:369px"></div>
<div class="ws" style="left:272.8px;top:369px"></div>
<div class="ws" style="left:79.2px;top:391px"></div>
<div class="ws" style="left:88.0px;top:391px"></div>
<div class="ws" style="left:96.8px;top:391px"></div>
<div class="ws" style="left:105.6px;top:391px"></div>
<div class="ws" style="left:114.4px;top:391px"></div>
<div class="ws" style="left:123.2px;top:391px"></div>
<div class="ws" style="left:132.0px;top:391px"></div>
<div class="ws" style="left:140.8px;top:391px"></div>
<div class="ws" style="left:149.6px;top:391px"></div>
<div class="ws" style="left:158.4px;top:391px"></div>
<div class="ws" style="left:167.2px;top:391px"></div>
<div class="ws" style="left:176.0px;top:391px"></div>
<div class="ws" style="left:184.8px;top:391px"></div>
<div class="ws" style="left:193.6px;top:391px"></div>
<div class="ws" style="left:202.4px;top:391px"></div>
<div class="ws" style="left:211.2px;top:391px"></div>
<div class="ws" style="left:220.0px;top:391px"></div>
<div class="ws" style="left:228.8px;top:391px"></div>
<div class="ws" style="left:237.6px;top:391px"></div>
<div class="cl" style="left:66.0px;top:7px"><span style="color:#cccccc">    </span><span style="color:#808080">&lt;</span><span style="color:#569cd6">div</span><span style="color:#cccccc"> </span><span style="color:#9cdcfe">class</span><span style="color:#cccccc">=</span><span style="color:#ce9178">&quot;card&quot;</span><span style="color:#808080">&gt;</span></div>
<div class="ln" style="top:7px">8</div>
<div class="cl" style="left:66.0px;top:29px"><span style="color:#cccccc">        </span><span style="color:#808080">&lt;</span><span style="color:#569cd6">div</span><span style="color:#cccccc"> </span><span style="color:#9cdcfe">class</span><span style="color:#cccccc">=</span><span style="color:#ce9178">&quot;card-body&quot;</span><span style="color:#808080">&gt;</span></div>
<div class="ln" style="top:29px">9</div>
<div class="cl" style="left:66.0px;top:51px"><span style="color:#cccccc">            </span><span style="color:#808080">&lt;</span><span style="color:#569cd6">h5</span><span style="color:#cccccc"> </span><span style="color:#9cdcfe">class</span><span style="color:#cccccc">=</span><span style="color:#ce9178">&quot;card-title fw-semibold mb-4&quot;</span><span style="color:#808080">&gt;</span><span style="color:#d4d4d4">Data </span><span style="color:#ffd700">{</span><span style="color:#da70d6">{</span><span style="color:#cccccc"> </span><span style="color:#9cdcfe">$title</span><span style="color:#cccccc"> </span><span style="color:#da70d6">}</span><span style="color:#ffd700">}</span><span style="color:#808080">&lt;/</span><span style="color:#569cd6">h5</span><span style="color:#808080">&gt;</span></div>
<div class="ln" style="top:51px">10</div>
<div class="cl" style="left:66.0px;top:73px"><span style="color:#cccccc">            </span><span style="color:#808080">&lt;</span><span style="color:#569cd6">a</span><span style="color:#cccccc"> </span><span style="color:#9cdcfe">href</span><span style="color:#cccccc">=</span><span style="color:#ce9178">&quot;</span><span style="color:#dcdcaa">{{ </span><span style="color:#dcdcaa">route</span><span style="color:#dcdcaa">(</span><span style="color:#ce9178">&#x27;item.create&#x27;</span><span style="color:#dcdcaa">)</span><span style="color:#dcdcaa"> }}</span><span style="color:#ce9178">&quot;</span><span style="color:#cccccc"> </span><span style="color:#9cdcfe">class</span><span style="color:#cccccc">=</span><span style="color:#ce9178">&quot;btn btn-primary mb-4&quot;</span><span style="color:#808080">&gt;</span><span style="color:#d4d4d4">Tambah Data </span><span style="color:#ffd700">{</span><span style="color:#da70d6">{</span><span style="color:#cccccc"> </span><span style="color:#9cdcfe">$title</span><span style="color:#cccccc"> </span><span style="color:#da70d6">}</span><span style="color:#ffd700">}</span><span style="color:#808080">&lt;/</span><span style="color:#569cd6">a</span><span style="color:#808080">&gt;</span></div>
<div class="ln" style="top:73px">11</div>
<div class="cl" style="left:66.0px;top:95px"></div>
<div class="ln" style="top:95px">12</div>
<div class="cl" style="left:66.0px;top:117px"><span style="color:#cccccc">            </span><span style="color:#808080">&lt;</span><span style="color:#569cd6">div</span><span style="color:#cccccc"> </span><span style="color:#9cdcfe">class</span><span style="color:#cccccc">=</span><span style="color:#ce9178">&quot;table-responsive&quot;</span><span style="color:#808080">&gt;</span></div>
<div class="ln" style="top:117px">13</div>
<div class="cl" style="left:66.0px;top:139px"><span style="color:#cccccc">                </span><span style="color:#808080">&lt;</span><span style="color:#569cd6">table</span><span style="color:#cccccc"> </span><span style="color:#9cdcfe">id</span><span style="color:#cccccc">=</span><span style="color:#ce9178">&quot;datatable&quot;</span><span style="color:#cccccc"> </span><span style="color:#9cdcfe">class</span><span style="color:#cccccc">=</span><span style="color:#ce9178">&quot;table table-striped&quot;</span><span style="color:#808080">&gt;</span></div>
<div class="ln" style="top:139px">14</div>
<div class="cl" style="left:66.0px;top:161px"><span style="color:#cccccc">                    </span><span style="color:#808080">&lt;</span><span style="color:#569cd6">thead</span><span style="color:#808080">&gt;</span></div>
<div class="ln act" style="top:161px">15</div>
<div class="cl" style="left:66.0px;top:183px"><span style="color:#cccccc">                        </span><span style="color:#808080">&lt;</span><span style="color:#569cd6">tr</span><span style="color:#808080">&gt;</span></div>
<div class="ln" style="top:183px">16</div>
<div class="cl" style="left:66.0px;top:205px"><span style="color:#cccccc">                            </span><span style="color:#808080">&lt;</span><span style="color:#569cd6">th</span><span style="color:#808080">&gt;</span><span style="color:#d4d4d4">No</span><span style="color:#808080">&lt;/</span><span style="color:#569cd6">th</span><span style="color:#808080">&gt;</span></div>
<div class="ln" style="top:205px">17</div>
<div class="cl" style="left:66.0px;top:227px"><span style="color:#cccccc">                            </span><span style="color:#808080">&lt;</span><span style="color:#569cd6">th</span><span style="color:#808080">&gt;</span><span style="color:#d4d4d4">Nama</span><span style="color:#808080">&lt;/</span><span style="color:#569cd6">th</span><span style="color:#808080">&gt;</span></div>
<div class="ln" style="top:227px">18</div>
<div class="cl" style="left:66.0px;top:249px"><span style="color:#cccccc">                            </span><span style="color:#808080">&lt;</span><span style="color:#569cd6">th</span><span style="color:#808080">&gt;</span><span style="color:#d4d4d4">Foto</span><span style="color:#808080">&lt;/</span><span style="color:#569cd6">th</span><span style="color:#808080">&gt;</span></div>
<div class="ln" style="top:249px">19</div>
<div class="cl" style="left:66.0px;top:271px"><span style="color:#cccccc">                            </span><span style="color:#808080">&lt;</span><span style="color:#569cd6">th</span><span style="color:#808080">&gt;</span><span style="color:#d4d4d4">Kategori</span><span style="color:#808080">&lt;/</span><span style="color:#569cd6">th</span><span style="color:#808080">&gt;</span></div>
<div class="ln" style="top:271px">20</div>
<div class="cl" style="left:66.0px;top:293px"><span style="color:#cccccc">                            </span><span style="color:#808080">&lt;</span><span style="color:#569cd6">th</span><span style="color:#808080">&gt;</span><span style="color:#d4d4d4">Kode Unik</span><span style="color:#808080">&lt;/</span><span style="color:#569cd6">th</span><span style="color:#808080">&gt;</span></div>
<div class="ln" style="top:293px">21</div>
<div class="cl" style="left:66.0px;top:315px"><span style="color:#cccccc">                            </span><span style="color:#808080">&lt;</span><span style="color:#569cd6">th</span><span style="color:#808080">&gt;</span><span style="color:#d4d4d4">Kondisi</span><span style="color:#808080">&lt;/</span><span style="color:#569cd6">th</span><span style="color:#808080">&gt;</span></div>
<div class="ln" style="top:315px">22</div>
<div class="cl" style="left:66.0px;top:337px"><span style="color:#cccccc">                            </span><span style="color:#808080">&lt;</span><span style="color:#569cd6">th</span><span style="color:#808080">&gt;</span><span style="color:#d4d4d4">Aksi</span><span style="color:#808080">&lt;/</span><span style="color:#569cd6">th</span><span style="color:#808080">&gt;</span></div>
<div class="ln" style="top:337px">23</div>
<div class="cl" style="left:66.0px;top:359px"><span style="color:#cccccc">                        </span><span style="color:#808080">&lt;/</span><span style="color:#569cd6">tr</span><span style="color:#808080">&gt;</span></div>
<div class="ln" style="top:359px">24</div>
<div class="cl" style="left:66.0px;top:381px"><span style="color:#cccccc">                    </span><span style="color:#808080">&lt;/</span><span style="color:#569cd6">thead</span><span style="color:#808080">&gt;</span></div>
<div class="ln" style="top:381px">25</div>
<div class="cl" style="left:66.0px;top:403px"><span style="color:#cccccc">                    </span><span style="color:#808080">&lt;</span><span style="color:#569cd6">tbody</span><span style="color:#808080">&gt;</span></div>
<div class="ln" style="top:403px">26</div>
<div class="cl" style="left:66.0px;top:425px"><span style="color:#cccccc">                        </span><span style="color:#569cd6">@foreach</span><span style="color:#cccccc"> </span><span style="color:#ffd700">(</span><span style="color:#9cdcfe">$items</span><span style="color:#d4d4d4"> as </span><span style="color:#9cdcfe">$item</span><span style="color:#ffd700">)</span></div>
<div class="ln" style="top:425px">27</div>
<div class="cl" style="left:66.0px;top:447px"><span style="color:#cccccc">                            </span><span style="color:#808080">&lt;</span><span style="color:#569cd6">tr</span><span style="color:#808080">&gt;</span></div>
<div class="ln" style="top:447px">28</div>
<div class="cl" style="left:66.0px;top:469px"><span style="color:#cccccc">                                </span><span style="color:#808080">&lt;</span><span style="color:#569cd6">td</span><span style="color:#808080">&gt;</span><span style="color:#ffd700">{</span><span style="color:#da70d6">{</span><span style="color:#cccccc"> </span><span style="color:#9cdcfe">$loop</span><span style="color:#d4d4d4">-&gt;</span><span style="color:#9cdcfe">iteration</span><span style="color:#cccccc"> </span><span style="color:#da70d6">}</span><span style="color:#ffd700">}</span><span style="color:#808080">&lt;/</span><span style="color:#569cd6">td</span><span style="color:#808080">&gt;</span></div>
<div class="ln" style="top:469px">29</div>
<div class="cl" style="left:66.0px;top:491px"><span style="color:#cccccc">                                </span><span style="color:#808080">&lt;</span><span style="color:#569cd6">td</span><span style="color:#808080">&gt;</span><span style="color:#ffd700">{</span><span style="color:#da70d6">{</span><span style="color:#cccccc"> </span><span style="color:#9cdcfe">$item</span><span style="color:#d4d4d4">-&gt;</span><span style="color:#9cdcfe">name</span><span style="color:#cccccc"> </span><span style="color:#da70d6">}</span><span style="color:#ffd700">}</span><span style="color:#808080">&lt;/</span><span style="color:#569cd6">td</span><span style="color:#808080">&gt;</span></div>
<div class="ln" style="top:491px">30</div>
<div class="cl" style="left:66.0px;top:513px"><span style="color:#cccccc">                                </span><span style="color:#808080">&lt;</span><span style="color:#569cd6">td</span><span style="color:#808080">&gt;</span></div>
<div class="ln" style="top:513px">31</div>
<div class="cl" style="left:66.0px;top:535px"><span style="color:#cccccc">                                    </span><span style="color:#808080">&lt;</span><span style="color:#569cd6">a</span><span style="color:#cccccc"> </span><span style="color:#9cdcfe">href</span><span style="color:#cccccc">=</span><span style="color:#ce9178">&quot;</span><span style="color:#dcdcaa">{{ </span><span style="color:#dcdcaa">route</span><span style="color:#dcdcaa">(</span><span style="color:#ce9178">&#x27;item.edit&#x27;</span><span style="color:#cccccc">, </span><span style="color:#9cdcfe">$item</span><span style="color:#d4d4d4">-&gt;</span><span style="color:#9cdcfe">id</span><span style="color:#dcdcaa">)</span><span style="color:#dcdcaa"> }}</span><span style="color:#ce9178">&quot;</span><span style="color:#cccccc"> </span><span style="color:#9cdcfe">class</span><span style="color:#cccccc">=</span><span style="color:#ce9178">&quot;btn btn-warning btn-sm&quot;</span></div>
<div class="ln" style="top:535px">32</div>
<div class="cl" style="left:66.0px;top:557px"><span style="color:#cccccc">                                    </span><span style="color:#808080">&lt;</span><span style="color:#569cd6">form</span><span style="color:#cccccc"> </span><span style="color:#9cdcfe">id</span><span style="color:#cccccc">=</span><span style="color:#ce9178">&quot;deleteForm</span><span style="color:#dcdcaa">{{ </span><span style="color:#9cdcfe">$item</span><span style="color:#d4d4d4">-&gt;</span><span style="color:#9cdcfe">id</span><span style="color:#dcdcaa"> }}</span><span style="color:#ce9178">&quot;</span><span style="color:#cccccc"> </span><span style="color:#9cdcfe">action</span><span style="color:#cccccc">=</span><span style="color:#ce9178">&quot;</span><span style="color:#dcdcaa">{{ </span><span style="color:#dcdcaa">route</span><span style="color:#dcdcaa">(</span><span style="color:#ce9178">&#x27;item.destroy&#x27;</span><span style="color:#cccccc">, </span><span style="color:#9cdcfe">$item</span><span style="color:#d4d4d4">-&gt;</span><span style="color:#9cdcfe">id</span><span style="color:#dcdcaa">)</span><span style="color:#dcdcaa"> }}</span><span style="color:#ce9178">&quot;</span></div>
<div class="ln" style="top:557px">33</div>
<div class="cl" style="left:66.0px;top:579px"><span style="color:#cccccc">                                        </span><span style="color:#9cdcfe">method</span><span style="color:#cccccc">=</span><span style="color:#ce9178">&quot;POST&quot;</span><span style="color:#cccccc"> </span><span style="color:#9cdcfe">class</span><span style="color:#cccccc">=</span><span style="color:#ce9178">&quot;d-inline&quot;</span><span style="color:#808080">&gt;</span></div>
<div class="ln" style="top:579px">34</div>
<div class="cl" style="left:66.0px;top:601px"><span style="color:#cccccc">                                        </span><span style="color:#569cd6">@csrf</span></div>
<div class="ln" style="top:601px">35</div>
<div class="cl" style="left:66.0px;top:623px"><span style="color:#cccccc">                                        </span><span style="color:#569cd6">@method</span><span style="color:#ffd700">(</span><span style="color:#ce9178">&#x27;DELETE&#x27;</span><span style="color:#ffd700">)</span></div>
<div class="ln" style="top:623px">36</div>
<div class="cl" style="left:66.0px;top:645px"><span style="color:#cccccc">                                        </span><span style="color:#808080">&lt;</span><span style="color:#569cd6">button</span><span style="color:#cccccc"> </span><span style="color:#9cdcfe">type</span><span style="color:#cccccc">=</span><span style="color:#ce9178">&quot;button&quot;</span><span style="color:#cccccc"> </span><span style="color:#9cdcfe">class</span><span style="color:#cccccc">=</span><span style="color:#ce9178">&quot;btn btn-danger btn-sm&quot;</span></div>
<div class="ln" style="top:645px">37</div>
<svg style="left:138px;top:-3px" width="8" height="7" viewBox="0 0 8 7"><path d="M2.5 0.5c0 2.5 1.2 4.3 3.5 5.5" fill="none" stroke="#e6c84a" stroke-width="1.2"/></svg>
<svg style="left:224px;top:-3px" width="8" height="7" viewBox="0 0 8 7"><path d="M5.5 0.5c0 2.5-1.2 4.3-3.5 5.5" fill="none" stroke="#e6c84a" stroke-width="1.2"/></svg>
<svg style="left:74px;top:164px" width="10" height="12" viewBox="0 0 10 12"><path d="M-0.5 0h2.3l2.2 2.2-2.2 2.2H-0.5z" fill="#f0c050"/><path d="M4.1 4.3l1.1 2.3 2.3 1.1-2.3 1.1-1.1 2.3-1.1-2.3-2.3-1.1 2.3-1.1z" fill="#f5c518"/></svg>
<div class="a" style="left:0;top:0;width:1110px;height:6px;box-shadow:inset 0 6px 6px -6px #000"></div>
<div class="a" style="left:81px;top:640px;width:753px;height:12px;background:rgba(121,121,121,0.4)"></div>
<div class="a" style="left:982px;top:0;width:113px;height:652px;background:#1f1f1f"></div>
<div class="mm" style="left:991px;top:0px;width:8px;background:#569cd6;opacity:.5"></div>
<div class="mm" style="left:999px;top:0px;width:1px;background:#ffd700;opacity:.5"></div>
<div class="mm" style="left:1000px;top:0px;width:19px;background:#ce9178;opacity:.5"></div>
<div class="mm" style="left:1019px;top:0px;width:1px;background:#ffd700;opacity:.5"></div>
<div class="mm" style="left:991px;top:4px;width:8px;background:#569cd6;opacity:.5"></div>
<div class="mm" style="left:999px;top:4px;width:1px;background:#ffd700;opacity:.5"></div>
<div class="mm" style="left:1000px;top:4px;width:7px;background:#ce9178;opacity:.5"></div>
<div class="mm" style="left:1007px;top:4px;width:1px;background:#cccccc;opacity:.5"></div>
<div class="mm" style="left:1009px;top:4px;width:6px;background:#ce9178;opacity:.5"></div>
<div class="mm" style="left:1015px;top:4px;width:1px;background:#ffd700;opacity:.5"></div>
<div class="mm" style="left:995px;top:6px;width:4px;background:#6a9955;opacity:.5"></div>
<div class="mm" style="left:1000px;top:6px;width:10px;background:#6a9955;opacity:.5"></div>
<div class="mm" style="left:1011px;top:6px;width:3px;background:#6a9955;opacity:.5"></div>
<div class="mm" style="left:1015px;top:6px;width:2px;background:#d4d4d4;opacity:.5"></div>
<div class="mm" style="left:991px;top:8px;width:11px;background:#569cd6;opacity:.5"></div>
<div class="mm" style="left:995px;top:12px;width:8px;background:#569cd6;opacity:.5"></div>
<div class="mm" style="left:1003px;top:12px;width:1px;background:#ffd700;opacity:.5"></div>
<div class="mm" style="left:1004px;top:12px;width:9px;background:#ce9178;opacity:.5"></div>
<div class="mm" style="left:1013px;top:12px;width:1px;background:#ffd700;opacity:.5"></div>
<div class="mm" style="left:995px;top:14px;width:1px;background:#808080;opacity:.5"></div>
<div class="mm" style="left:996px;top:14px;width:3px;background:#569cd6;opacity:.5"></div>
<div class="mm" style="left:1000px;top:14px;width:5px;background:#9cdcfe;opacity:.5"></div>
<div class="mm" style="left:1005px;top:14px;width:1px;background:#cccccc;opacity:.5"></div>
<div class="mm" style="left:1006px;top:14px;width:6px;background:#ce9178;opacity:.5"></div>
<div class="mm" style="left:1012px;top:14px;width:1px;background:#808080;opacity:.5"></div>
<div class="mm" style="left:999px;top:16px;width:1px;background:#808080;opacity:.5"></div>
<div class="mm" style="left:1000px;top:16px;width:3px;background:#569cd6;opacity:.5"></div>
<div class="mm" style="left:1004px;top:16px;width:5px;background:#9cdcfe;opacity:.5"></div>
<div class="mm" style="left:1009px;top:16px;width:1px;background:#cccccc;opacity:.5"></div>
<div class="mm" style="left:1010px;top:16px;width:11px;background:#ce9178;opacity:.5"></div>
<div class="mm" style="left:1021px;top:16px;width:1px;background:#808080;opacity:.5"></div>
<div class="mm" style="left:1003px;top:18px;width:1px;background:#808080;opacity:.5"></div>
<div class="mm" style="left:1004px;top:18px;width:2px;background:#569cd6;opacity:.5"></div>
<div class="mm" style="left:1007px;top:18px;width:5px;background:#9cdcfe;opacity:.5"></div>
<div class="mm" style="left:1012px;top:18px;width:1px;background:#cccccc;opacity:.5"></div>
<div class="mm" style="left:1013px;top:18px;width:11px;background:#ce9178;opacity:.5"></div>
<div class="mm" style="left:1025px;top:18px;width:11px;background:#ce9178;opacity:.5"></div>
<div class="mm" style="left:1037px;top:18px;width:5px;background:#ce9178;opacity:.5"></div>
<div class="mm" style="left:1042px;top:18px;width:1px;background:#808080;opacity:.5"></div>
<div class="mm" style="left:1043px;top:18px;width:4px;background:#d4d4d4;opacity:.5"></div>
<div class="mm" style="left:1048px;top:18px;width:1px;background:#ffd700;opacity:.5"></div>
<div class="mm" style="left:1049px;top:18px;width:1px;background:#da70d6;opacity:.5"></div>
<div class="mm" style="left:1051px;top:18px;width:6px;background:#9cdcfe;opacity:.5"></div>
<div class="mm" style="left:1058px;top:18px;width:1px;background:#da70d6;opacity:.5"></div>
<div class="mm" style="left:1059px;top:18px;width:1px;background:#ffd700;opacity:.5"></div>
<div class="mm" style="left:1060px;top:18px;width:2px;background:#808080;opacity:.5"></div>
<div class="mm" style="left:1062px;top:18px;width:2px;background:#569cd6;opacity:.5"></div>
<div class="mm" style="left:1064px;top:18px;width:1px;background:#808080;opacity:.5"></div>
<div class="mm" style="left:1003px;top:20px;width:1px;background:#808080;opacity:.5"></div>
<div class="mm" style="left:1004px;top:20px;width:1px;background:#569cd6;opacity:.5"></div>
<div class="mm" style="left:1006px;top:20px;width:4px;background:#9cdcfe;opacity:.5"></div>
<div class="mm" style="left:1010px;top:20px;width:1px;background:#cccccc;opacity:.5"></div>
<div class="mm" style="left:1011px;top:20px;width:1px;background:#ce9178;opacity:.5"></div>
<div class="mm" style="left:1012px;top:20px;width:2px;background:#dcdcaa;opacity:.5"></div>
<div class="mm" style="left:1015px;top:20px;width:5px;background:#dcdcaa;opacity:.5"></div>
<div class="mm" style="left:1020px;top:20px;width:1px;background:#dcdcaa;opacity:.5"></div>
<div class="mm" style="left:1021px;top:20px;width:13px;background:#ce9178;opacity:.5"></div>
<div class="mm" style="left:1034px;top:20px;width:1px;background:#dcdcaa;opacity:.5"></div>
<div class="mm" style="left:1036px;top:20px;width:2px;background:#dcdcaa;opacity:.5"></div>
<div class="mm" style="left:1038px;top:20px;width:1px;background:#ce9178;opacity:.5"></div>
<div class="mm" style="left:1040px;top:20px;width:5px;background:#9cdcfe;opacity:.5"></div>
<div class="mm" style="left:1045px;top:20px;width:1px;background:#cccccc;opacity:.5"></div>
<div class="mm" style="left:1046px;top:20px;width:4px;background:#ce9178;opacity:.5"></div>
<div class="mm" style="left:1051px;top:20px;width:11px;background:#ce9178;opacity:.5"></div>
<div class="mm" style="left:1063px;top:20px;width:5px;background:#ce9178;opacity:.5"></div>
<div class="mm" style="left:1068px;top:20px;width:1px;background:#808080;opacity:.5"></div>
<div class="mm" style="left:1069px;top:20px;width:6px;background:#d4d4d4;opacity:.5"></div>
<div class="mm" style="left:1076px;top:20px;width:4px;background:#d4d4d4;opacity:.5"></div>
<div class="mm" style="left:1081px;top:20px;width:1px;background:#ffd700;opacity:.5"></div>
<div class="mm" style="left:1082px;top:20px;width:1px;background:#da70d6;opacity:.5"></div>
<div class="mm" style="left:1084px;top:20px;width:6px;background:#9cdcfe;opacity:.5"></div>
<div class="mm" style="left:1091px;top:20px;width:1px;background:#da70d6;opacity:.5"></div>
<div class="mm" style="left:1092px;top:20px;width:1px;background:#ffd700;opacity:.5"></div>
<div class="mm" style="left:1093px;top:20px;width:2px;background:#808080;opacity:.5"></div>
<div class="mm" style="left:1003px;top:24px;width:1px;background:#808080;opacity:.5"></div>
<div class="mm" style="left:1004px;top:24px;width:3px;background:#569cd6;opacity:.5"></div>
<div class="mm" style="left:1008px;top:24px;width:5px;background:#9cdcfe;opacity:.5"></div>
<div class="mm" style="left:1013px;top:24px;width:1px;background:#cccccc;opacity:.5"></div>
<div class="mm" style="left:1014px;top:24px;width:18px;background:#ce9178;opacity:.5"></div>
<div class="mm" style="left:1032px;top:24px;width:1px;background:#808080;opacity:.5"></div>
<div class="mm" style="left:1007px;top:26px;width:1px;background:#808080;opacity:.5"></div>
<div class="mm" style="left:1008px;top:26px;width:5px;background:#569cd6;opacity:.5"></div>
<div class="mm" style="left:1014px;top:26px;width:2px;background:#9cdcfe;opacity:.5"></div>
<div class="mm" style="left:1016px;top:26px;width:1px;background:#cccccc;opacity:.5"></div>
<div class="mm" style="left:1017px;top:26px;width:11px;background:#ce9178;opacity:.5"></div>
<div class="mm" style="left:1029px;top:26px;width:5px;background:#9cdcfe;opacity:.5"></div>
<div class="mm" style="left:1034px;top:26px;width:1px;background:#cccccc;opacity:.5"></div>
<div class="mm" style="left:1035px;top:26px;width:6px;background:#ce9178;opacity:.5"></div>
<div class="mm" style="left:1042px;top:26px;width:14px;background:#ce9178;opacity:.5"></div>
<div class="mm" style="left:1056px;top:26px;width:1px;background:#808080;opacity:.5"></div>
<div class="mm" style="left:1011px;top:50px;width:1px;background:#808080;opacity:.5"></div>
<div class="mm" style="left:1012px;top:50px;width:5px;background:#569cd6;opacity:.5"></div>
<div class="mm" style="left:1017px;top:50px;width:1px;background:#808080;opacity:.5"></div>
<div class="mm" style="left:1015px;top:52px;width:8px;background:#569cd6;opacity:.5"></div>
<div class="mm" style="left:1024px;top:52px;width:1px;background:#ffd700;opacity:.5"></div>
<div class="mm" style="left:1025px;top:52px;width:6px;background:#9cdcfe;opacity:.5"></div>
<div class="mm" style="left:1032px;top:52px;width:2px;background:#d4d4d4;opacity:.5"></div>
<div class="mm" style="left:1035px;top:52px;width:5px;background:#9cdcfe;opacity:.5"></div>
<div class="mm" style="left:1040px;top:52px;width:1px;background:#ffd700;opacity:.5"></div>
<div class="mm" style="left:1019px;top:54px;width:1px;background:#808080;opacity:.5"></div>
<div class="mm" style="left:1020px;top:54px;width:2px;background:#569cd6;opacity:.5"></div>
<div class="mm" style="left:1022px;top:54px;width:1px;background:#808080;opacity:.5"></div>
<div class="mm" style="left:1023px;top:56px;width:1px;background:#808080;opacity:.5"></div>
<div class="mm" style="left:1024px;top:56px;width:2px;background:#569cd6;opacity:.5"></div>
<div class="mm" style="left:1026px;top:56px;width:1px;background:#808080;opacity:.5"></div>
<div class="mm" style="left:1027px;top:56px;width:1px;background:#ffd700;opacity:.5"></div>
<div class="mm" style="left:1028px;top:56px;width:1px;background:#da70d6;opacity:.5"></div>
<div class="mm" style="left:1030px;top:56px;width:5px;background:#9cdcfe;opacity:.5"></div>
<div class="mm" style="left:1035px;top:56px;width:2px;background:#d4d4d4;opacity:.5"></div>
<div class="mm" style="left:1037px;top:56px;width:9px;background:#9cdcfe;opacity:.5"></div>
<div class="mm" style="left:1047px;top:56px;width:1px;background:#da70d6;opacity:.5"></div>
<div class="mm" style="left:1048px;top:56px;width:1px;background:#ffd700;opacity:.5"></div>
<div class="mm" style="left:1049px;top:56px;width:2px;background:#808080;opacity:.5"></div>
<div class="mm" style="left:1051px;top:56px;width:2px;background:#569cd6;opacity:.5"></div>
<div class="mm" style="left:1053px;top:56px;width:1px;background:#808080;opacity:.5"></div>
<div class="mm" style="left:1023px;top:58px;width:1px;background:#808080;opacity:.5"></div>
<div class="mm" style="left:1024px;top:58px;width:2px;background:#569cd6;opacity:.5"></div>
<div class="mm" style="left:1026px;top:58px;width:1px;background:#808080;opacity:.5"></div>
<div class="mm" style="left:1027px;top:58px;width:1px;background:#ffd700;opacity:.5"></div>
<div class="mm" style="left:1028px;top:58px;width:1px;background:#da70d6;opacity:.5"></div>
<div class="mm" style="left:1030px;top:58px;width:5px;background:#9cdcfe;opacity:.5"></div>
<div class="mm" style="left:1035px;top:58px;width:2px;background:#d4d4d4;opacity:.5"></div>
<div class="mm" style="left:1037px;top:58px;width:4px;background:#9cdcfe;opacity:.5"></div>
<div class="mm" style="left:1042px;top:58px;width:1px;background:#da70d6;opacity:.5"></div>
<div class="mm" style="left:1043px;top:58px;width:1px;background:#ffd700;opacity:.5"></div>
<div class="mm" style="left:1044px;top:58px;width:2px;background:#808080;opacity:.5"></div>
<div class="mm" style="left:1046px;top:58px;width:2px;background:#569cd6;opacity:.5"></div>
<div class="mm" style="left:1048px;top:58px;width:1px;background:#808080;opacity:.5"></div>
<div class="mm" style="left:1023px;top:60px;width:1px;background:#808080;opacity:.5"></div>
<div class="mm" style="left:1024px;top:60px;width:2px;background:#569cd6;opacity:.5"></div>
<div class="mm" style="left:1026px;top:60px;width:1px;background:#808080;opacity:.5"></div>
<div class="mm" style="left:1027px;top:62px;width:1px;background:#808080;opacity:.5"></div>
<div class="mm" style="left:1028px;top:62px;width:1px;background:#569cd6;opacity:.5"></div>
<div class="mm" style="left:1030px;top:62px;width:4px;background:#9cdcfe;opacity:.5"></div>
<div class="mm" style="left:1034px;top:62px;width:1px;background:#cccccc;opacity:.5"></div>
<div class="mm" style="left:1035px;top:62px;width:1px;background:#ce9178;opacity:.5"></div>
<div class="mm" style="left:1036px;top:62px;width:2px;background:#dcdcaa;opacity:.5"></div>
<div class="mm" style="left:1039px;top:62px;width:5px;background:#dcdcaa;opacity:.5"></div>
<div class="mm" style="left:1044px;top:62px;width:1px;background:#dcdcaa;opacity:.5"></div>
<div class="mm" style="left:1045px;top:62px;width:11px;background:#ce9178;opacity:.5"></div>
<div class="mm" style="left:1056px;top:62px;width:1px;background:#cccccc;opacity:.5"></div>
<div class="mm" style="left:1058px;top:62px;width:5px;background:#9cdcfe;opacity:.5"></div>
<div class="mm" style="left:1063px;top:62px;width:2px;background:#d4d4d4;opacity:.5"></div>
<div class="mm" style="left:1065px;top:62px;width:2px;background:#9cdcfe;opacity:.5"></div>
<div class="mm" style="left:1067px;top:62px;width:1px;background:#dcdcaa;opacity:.5"></div>
<div class="mm" style="left:1069px;top:62px;width:2px;background:#dcdcaa;opacity:.5"></div>
<div class="mm" style="left:1071px;top:62px;width:1px;background:#ce9178;opacity:.5"></div>
<div class="mm" style="left:1073px;top:62px;width:5px;background:#9cdcfe;opacity:.5"></div>
<div class="mm" style="left:1078px;top:62px;width:1px;background:#cccccc;opacity:.5"></div>
<div class="mm" style="left:1079px;top:62px;width:4px;background:#ce9178;opacity:.5"></div>
<div class="mm" style="left:1084px;top:62px;width:11px;background:#ce9178;opacity:.5"></div>
<div class="mm" style="left:1027px;top:64px;width:1px;background:#808080;opacity:.5"></div>
<div class="mm" style="left:1028px;top:64px;width:4px;background:#569cd6;opacity:.5"></div>
<div class="mm" style="left:1033px;top:64px;width:2px;background:#9cdcfe;opacity:.5"></div>
<div class="mm" style="left:1035px;top:64px;width:1px;background:#cccccc;opacity:.5"></div>
<div class="mm" style="left:1036px;top:64px;width:11px;background:#ce9178;opacity:.5"></div>
<div class="mm" style="left:1047px;top:64px;width:2px;background:#dcdcaa;opacity:.5"></div>
<div class="mm" style="left:1050px;top:64px;width:5px;background:#9cdcfe;opacity:.5"></div>
<div class="mm" style="left:1055px;top:64px;width:2px;background:#d4d4d4;opacity:.5"></div>
<div class="mm" style="left:1057px;top:64px;width:2px;background:#9cdcfe;opacity:.5"></div>
<div class="mm" style="left:1060px;top:64px;width:2px;background:#dcdcaa;opacity:.5"></div>
<div class="mm" style="left:1062px;top:64px;width:1px;background:#ce9178;opacity:.5"></div>
<div class="mm" style="left:1064px;top:64px;width:6px;background:#9cdcfe;opacity:.5"></div>
<div class="mm" style="left:1070px;top:64px;width:1px;background:#cccccc;opacity:.5"></div>
<div class="mm" style="left:1071px;top:64px;width:1px;background:#ce9178;opacity:.5"></div>
<div class="mm" style="left:1072px;top:64px;width:2px;background:#dcdcaa;opacity:.5"></div>
<div class="mm" style="left:1075px;top:64px;width:5px;background:#dcdcaa;opacity:.5"></div>
<div class="mm" style="left:1080px;top:64px;width:1px;background:#dcdcaa;opacity:.5"></div>
<div class="mm" style="left:1081px;top:64px;width:14px;background:#ce9178;opacity:.5"></div>
<div class="mm" style="left:1031px;top:66px;width:6px;background:#9cdcfe;opacity:.5"></div>
<div class="mm" style="left:1037px;top:66px;width:1px;background:#cccccc;opacity:.5"></div>
<div class="mm" style="left:1038px;top:66px;width:6px;background:#ce9178;opacity:.5"></div>
<div class="mm" style="left:1045px;top:66px;width:5px;background:#9cdcfe;opacity:.5"></div>
<div class="mm" style="left:1050px;top:66px;width:1px;background:#cccccc;opacity:.5"></div>
<div class="mm" style="left:1051px;top:66px;width:10px;background:#ce9178;opacity:.5"></div>
<div class="mm" style="left:1061px;top:66px;width:1px;background:#808080;opacity:.5"></div>
<div class="mm" style="left:1031px;top:68px;width:5px;background:#569cd6;opacity:.5"></div>
<div class="mm" style="left:1031px;top:70px;width:7px;background:#569cd6;opacity:.5"></div>
<div class="mm" style="left:1038px;top:70px;width:1px;background:#ffd700;opacity:.5"></div>
<div class="mm" style="left:1039px;top:70px;width:8px;background:#ce9178;opacity:.5"></div>
<div class="mm" style="left:1047px;top:70px;width:1px;background:#ffd700;opacity:.5"></div>
<div class="mm" style="left:1031px;top:72px;width:1px;background:#808080;opacity:.5"></div>
<div class="mm" style="left:1032px;top:72px;width:6px;background:#569cd6;opacity:.5"></div>
<div class="mm" style="left:1039px;top:72px;width:4px;background:#9cdcfe;opacity:.5"></div>
<div class="mm" style="left:1043px;top:72px;width:1px;background:#cccccc;opacity:.5"></div>
<div class="mm" style="left:1044px;top:72px;width:8px;background:#ce9178;opacity:.5"></div>
<div class="mm" style="left:1053px;top:72px;width:5px;background:#9cdcfe;opacity:.5"></div>
<div class="mm" style="left:1058px;top:72px;width:1px;background:#cccccc;opacity:.5"></div>
<div class="mm" style="left:1059px;top:72px;width:4px;background:#ce9178;opacity:.5"></div>
<div class="mm" style="left:1064px;top:72px;width:10px;background:#ce9178;opacity:.5"></div>
<div class="mm" style="left:1075px;top:72px;width:7px;background:#ce9178;opacity:.5"></div>
<div class="mm" style="left:1035px;top:74px;width:1px;background:#808080;opacity:.5"></div>
<div class="mm" style="left:1036px;top:74px;width:1px;background:#569cd6;opacity:.5"></div>
<div class="mm" style="left:1038px;top:74px;width:5px;background:#9cdcfe;opacity:.5"></div>
<div class="mm" style="left:1043px;top:74px;width:1px;background:#cccccc;opacity:.5"></div>
<div class="mm" style="left:1044px;top:74px;width:3px;background:#ce9178;opacity:.5"></div>
<div class="mm" style="left:1048px;top:74px;width:9px;background:#ce9178;opacity:.5"></div>
<div class="mm" style="left:1057px;top:74px;width:3px;background:#808080;opacity:.5"></div>
<div class="mm" style="left:1060px;top:74px;width:1px;background:#569cd6;opacity:.5"></div>
<div class="mm" style="left:1061px;top:74px;width:1px;background:#808080;opacity:.5"></div>
<div class="mm" style="left:1031px;top:76px;width:2px;background:#808080;opacity:.5"></div>
<div class="mm" style="left:1033px;top:76px;width:6px;background:#569cd6;opacity:.5"></div>
<div class="mm" style="left:1039px;top:76px;width:1px;background:#808080;opacity:.5"></div>
<div class="mm" style="left:1027px;top:78px;width:2px;background:#808080;opacity:.5"></div>
<div class="mm" style="left:1029px;top:78px;width:4px;background:#569cd6;opacity:.5"></div>
<div class="mm" style="left:1033px;top:78px;width:1px;background:#808080;opacity:.5"></div>
<div class="mm" style="left:1023px;top:80px;width:2px;background:#808080;opacity:.5"></div>
<div class="mm" style="left:1025px;top:80px;width:2px;background:#569cd6;opacity:.5"></div>
<div class="mm" style="left:1027px;top:80px;width:1px;background:#808080;opacity:.5"></div>
<div class="mm" style="left:1019px;top:82px;width:2px;background:#808080;opacity:.5"></div>
<div class="mm" style="left:1021px;top:82px;width:2px;background:#569cd6;opacity:.5"></div>
<div class="mm" style="left:1023px;top:82px;width:1px;background:#808080;opacity:.5"></div>
<div class="mm" style="left:1015px;top:84px;width:11px;background:#569cd6;opacity:.5"></div>
<div class="mm" style="left:1011px;top:86px;width:2px;background:#808080;opacity:.5"></div>
<div class="mm" style="left:1013px;top:86px;width:5px;background:#569cd6;opacity:.5"></div>
<div class="mm" style="left:1018px;top:86px;width:1px;background:#808080;opacity:.5"></div>
<div class="mm" style="left:1007px;top:88px;width:2px;background:#808080;opacity:.5"></div>
<div class="mm" style="left:1009px;top:88px;width:5px;background:#569cd6;opacity:.5"></div>
<div class="mm" style="left:1014px;top:88px;width:1px;background:#808080;opacity:.5"></div>
<div class="mm" style="left:1003px;top:90px;width:2px;background:#808080;opacity:.5"></div>
<div class="mm" style="left:1005px;top:90px;width:3px;background:#569cd6;opacity:.5"></div>
<div class="mm" style="left:1008px;top:90px;width:1px;background:#808080;opacity:.5"></div>
<div class="mm" style="left:999px;top:92px;width:2px;background:#808080;opacity:.5"></div>
<div class="mm" style="left:1001px;top:92px;width:3px;background:#569cd6;opacity:.5"></div>
<div class="mm" style="left:1004px;top:92px;width:1px;background:#808080;opacity:.5"></div>
<div class="mm" style="left:995px;top:94px;width:2px;background:#808080;opacity:.5"></div>
<div class="mm" style="left:997px;top:94px;width:3px;background:#569cd6;opacity:.5"></div>
<div class="mm" style="left:1000px;top:94px;width:1px;background:#808080;opacity:.5"></div>
<div class="mm" style="left:991px;top:96px;width:11px;background:#569cd6;opacity:.5"></div>
<div class="mm" style="left:991px;top:100px;width:5px;background:#569cd6;opacity:.5"></div>
<div class="mm" style="left:996px;top:100px;width:1px;background:#ffd700;opacity:.5"></div>
<div class="mm" style="left:997px;top:100px;width:4px;background:#ce9178;opacity:.5"></div>
<div class="mm" style="left:1001px;top:100px;width:1px;background:#ffd700;opacity:.5"></div>
<div class="mm" style="left:995px;top:102px;width:1px;background:#808080;opacity:.5"></div>
<div class="mm" style="left:996px;top:102px;width:6px;background:#569cd6;opacity:.5"></div>
<div class="mm" style="left:1002px;top:102px;width:1px;background:#808080;opacity:.5"></div>
<div class="mm" style="left:999px;top:104px;width:17px;background:#dcdcaa;opacity:.5"></div>
<div class="mm" style="left:1016px;top:104px;width:1px;background:#cccccc;opacity:.5"></div>
<div class="mm" style="left:1017px;top:104px;width:8px;background:#569cd6;opacity:.5"></div>
<div class="mm" style="left:1025px;top:104px;width:2px;background:#cccccc;opacity:.5"></div>
<div class="mm" style="left:1028px;top:104px;width:1px;background:#cccccc;opacity:.5"></div>
<div class="mm" style="left:1003px;top:106px;width:2px;background:#dcdcaa;opacity:.5"></div>
<div class="mm" style="left:1005px;top:106px;width:12px;background:#ce9178;opacity:.5"></div>
<div class="mm" style="left:1017px;top:106px;width:2px;background:#cccccc;opacity:.5"></div>
<div class="mm" style="left:1019px;top:106px;width:9px;background:#dcdcaa;opacity:.5"></div>
<div class="mm" style="left:1028px;top:106px;width:3px;background:#cccccc;opacity:.5"></div>
<div class="mm" style="left:999px;top:108px;width:3px;background:#cccccc;opacity:.5"></div>
<div class="mm" style="left:999px;top:112px;width:2px;background:#6a9955;opacity:.5"></div>
<div class="mm" style="left:1002px;top:112px;width:7px;background:#6a9955;opacity:.5"></div>
<div class="mm" style="left:1010px;top:112px;width:6px;background:#6a9955;opacity:.5"></div>
<div class="mm" style="left:999px;top:114px;width:8px;background:#569cd6;opacity:.5"></div>
<div class="mm" style="left:1008px;top:114px;width:13px;background:#dcdcaa;opacity:.5"></div>
<div class="mm" style="left:1021px;top:114px;width:1px;background:#cccccc;opacity:.5"></div>
<div class="mm" style="left:1022px;top:114px;width:2px;background:#9cdcfe;opacity:.5"></div>
<div class="mm" style="left:1024px;top:114px;width:1px;background:#cccccc;opacity:.5"></div>
<div class="mm" style="left:1026px;top:114px;width:1px;background:#cccccc;opacity:.5"></div>
<div class="mm" style="left:1003px;top:116px;width:4px;background:#9cdcfe;opacity:.5"></div>
<div class="mm" style="left:1007px;top:116px;width:1px;background:#cccccc;opacity:.5"></div>
<div class="mm" style="left:1008px;top:116px;width:4px;background:#dcdcaa;opacity:.5"></div>
<div class="mm" style="left:1012px;top:116px;width:2px;background:#cccccc;opacity:.5"></div>
<div class="mm" style="left:1007px;top:118px;width:5px;background:#9cdcfe;opacity:.5"></div>
<div class="mm" style="left:1012px;top:118px;width:1px;background:#cccccc;opacity:.5"></div>
<div class="mm" style="left:1014px;top:118px;width:7px;background:#ce9178;opacity:.5"></div>
<div class="mm" style="left:1022px;top:118px;width:4px;background:#ce9178;opacity:.5"></div>
<div class="mm" style="left:1027px;top:118px;width:7px;background:#ce9178;opacity:.5"></div>
<div class="mm" style="left:1034px;top:118px;width:1px;background:#cccccc;opacity:.5"></div>
<div class="mm" style="left:1007px;top:120px;width:4px;background:#9cdcfe;opacity:.5"></div>
<div class="mm" style="left:1011px;top:120px;width:1px;background:#cccccc;opacity:.5"></div>
<div class="mm" style="left:1013px;top:120px;width:5px;background:#ce9178;opacity:.5"></div>
<div class="mm" style="left:1019px;top:120px;width:4px;background:#ce9178;opacity:.5"></div>
<div class="mm" style="left:1024px;top:120px;width:7px;background:#ce9178;opacity:.5"></div>
<div class="mm" style="left:1032px;top:120px;width:5px;background:#ce9178;opacity:.5"></div>
<div class="mm" style="left:1038px;top:120px;width:5px;background:#ce9178;opacity:.5"></div>
<div class="mm" style="left:1044px;top:120px;width:14px;background:#ce9178;opacity:.5"></div>
<div class="mm" style="left:1058px;top:120px;width:1px;background:#cccccc;opacity:.5"></div>
<div class="mm" style="left:1007px;top:122px;width:4px;background:#9cdcfe;opacity:.5"></div>
<div class="mm" style="left:1011px;top:122px;width:1px;background:#cccccc;opacity:.5"></div>
<div class="mm" style="left:1013px;top:122px;width:9px;background:#ce9178;opacity:.5"></div>
<div class="mm" style="left:1022px;top:122px;width:1px;background:#cccccc;opacity:.5"></div>
<div class="mm" style="left:1007px;top:124px;width:10px;background:#9cdcfe;opacity:.5"></div>
<div class="mm" style="left:1017px;top:124px;width:1px;background:#cccccc;opacity:.5"></div>
<div class="mm" style="left:1019px;top:124px;width:4px;background:#569cd6;opacity:.5"></div>
<div class="mm" style="left:1023px;top:124px;width:1px;background:#cccccc;opacity:.5"></div>
<div class="mm" style="left:1007px;top:126px;width:10px;background:#9cdcfe;opacity:.5"></div>
<div class="mm" style="left:1017px;top:126px;width:1px;background:#cccccc;opacity:.5"></div>
<div class="mm" style="left:1019px;top:126px;width:4px;background:#ce9178;opacity:.5"></div>
<div class="mm" style="left:1023px;top:126px;width:1px;background:#cccccc;opacity:.5"></div>
<div class="mm" style="left:1003px;top:128px;width:3px;background:#cccccc;opacity:.5"></div>
<div class="mm" style="left:1006px;top:128px;width:4px;background:#dcdcaa;opacity:.5"></div>
<div class="mm" style="left:1010px;top:128px;width:2px;background:#cccccc;opacity:.5"></div>
<div class="mm" style="left:1012px;top:128px;width:6px;background:#9cdcfe;opacity:.5"></div>
<div class="mm" style="left:1018px;top:128px;width:1px;background:#cccccc;opacity:.5"></div>
<div class="mm" style="left:1020px;top:128px;width:2px;background:#cccccc;opacity:.5"></div>
<div class="mm" style="left:1023px;top:128px;width:1px;background:#cccccc;opacity:.5"></div>
<div class="mm" style="left:1007px;top:130px;width:2px;background:#569cd6;opacity:.5"></div>
<div class="mm" style="left:1010px;top:130px;width:1px;background:#cccccc;opacity:.5"></div>
<div class="mm" style="left:1011px;top:130px;width:18px;background:#9cdcfe;opacity:.5"></div>
<div class="mm" style="left:1029px;top:130px;width:1px;background:#cccccc;opacity:.5"></div>
<div class="mm" style="left:1031px;top:130px;width:1px;background:#cccccc;opacity:.5"></div>
<div class="mm" style="left:1011px;top:132px;width:2px;background:#6a9955;opacity:.5"></div>
<div class="mm" style="left:1014px;top:132px;width:6px;background:#6a9955;opacity:.5"></div>
<div class="mm" style="left:1021px;top:132px;width:4px;background:#6a9955;opacity:.5"></div>
<div class="mm" style="left:1026px;top:132px;width:6px;background:#6a9955;opacity:.5"></div>
<div class="mm" style="left:1033px;top:132px;width:2px;background:#6a9955;opacity:.5"></div>
<div class="mm" style="left:1011px;top:134px;width:8px;background:#9cdcfe;opacity:.5"></div>
<div class="mm" style="left:1019px;top:134px;width:1px;background:#cccccc;opacity:.5"></div>
<div class="mm" style="left:1020px;top:134px;width:14px;background:#dcdcaa;opacity:.5"></div>
<div class="mm" style="left:1034px;top:134px;width:1px;background:#cccccc;opacity:.5"></div>
<div class="mm" style="left:1035px;top:134px;width:12px;background:#ce9178;opacity:.5"></div>
<div class="mm" style="left:1048px;top:134px;width:1px;background:#cccccc;opacity:.5"></div>
<div class="mm" style="left:1050px;top:134px;width:13px;background:#cccccc;opacity:.5"></div>
<div class="mm" style="left:1007px;top:136px;width:1px;background:#cccccc;opacity:.5"></div>
<div class="mm" style="left:1009px;top:136px;width:4px;background:#569cd6;opacity:.5"></div>
<div class="mm" style="left:1014px;top:136px;width:1px;background:#cccccc;opacity:.5"></div>
<div class="mm" style="left:1011px;top:138px;width:2px;background:#6a9955;opacity:.5"></div>
<div class="mm" style="left:1014px;top:138px;width:6px;background:#6a9955;opacity:.5"></div>
<div class="mm" style="left:1021px;top:138px;width:6px;background:#6a9955;opacity:.5"></div>
<div class="mm" style="left:1028px;top:138px;width:6px;background:#6a9955;opacity:.5"></div>
<div class="mm" style="left:1011px;top:140px;width:4px;background:#9cdcfe;opacity:.5"></div>
<div class="mm" style="left:1015px;top:140px;width:1px;background:#cccccc;opacity:.5"></div>
<div class="mm" style="left:1016px;top:140px;width:4px;background:#dcdcaa;opacity:.5"></div>
<div class="mm" style="left:1020px;top:140px;width:1px;background:#cccccc;opacity:.5"></div>
<div class="mm" style="left:1021px;top:140px;width:11px;background:#ce9178;opacity:.5"></div>
<div class="mm" style="left:1032px;top:140px;width:1px;background:#cccccc;opacity:.5"></div>
<div class="mm" style="left:1034px;top:140px;width:5px;background:#ce9178;opacity:.5"></div>
<div class="mm" style="left:1040px;top:140px;width:5px;background:#ce9178;opacity:.5"></div>
<div class="mm" style="left:1045px;top:140px;width:1px;background:#cccccc;opacity:.5"></div>
<div class="mm" style="left:1015px;top:142px;width:6px;background:#ce9178;opacity:.5"></div>
<div class="mm" style="left:1021px;top:142px;width:2px;background:#cccccc;opacity:.5"></div>
<div class="mm" style="left:1011px;top:144px;width:3px;background:#cccccc;opacity:.5"></div>
<div class="mm" style="left:1007px;top:146px;width:1px;background:#cccccc;opacity:.5"></div>
<div class="mm" style="left:1003px;top:148px;width:3px;background:#cccccc;opacity:.5"></div>
<div class="mm" style="left:999px;top:150px;width:1px;background:#cccccc;opacity:.5"></div>
<div class="mm" style="left:995px;top:152px;width:2px;background:#808080;opacity:.5"></div>
<div class="mm" style="left:997px;top:152px;width:6px;background:#569cd6;opacity:.5"></div>
<div class="mm" style="left:1003px;top:152px;width:1px;background:#808080;opacity:.5"></div>
<div class="mm" style="left:991px;top:154px;width:8px;background:#569cd6;opacity:.5"></div>
<div class="a" style="left:991px;top:28px;width:104px;height:20px;background:#1f3b5a"></div>
<div class="a" style="left:991px;top:28px;width:28px;height:2px;background:#2b5b8c"></div>
<div class="a" style="left:991px;top:30px;width:29px;height:2px;background:#2b5b8c"></div>
<div class="a" style="left:991px;top:32px;width:40px;height:2px;background:#2b5b8c"></div>
<div class="a" style="left:991px;top:34px;width:42px;height:2px;background:#2b5b8c"></div>
<div class="a" style="left:991px;top:36px;width:42px;height:2px;background:#2b5b8c"></div>
<div class="a" style="left:991px;top:38px;width:46px;height:2px;background:#2b5b8c"></div>
<div class="a" style="left:991px;top:40px;width:47px;height:2px;background:#2b5b8c"></div>
<div class="a" style="left:991px;top:42px;width:45px;height:2px;background:#2b5b8c"></div>
<div class="a" style="left:991px;top:44px;width:42px;height:2px;background:#2b5b8c"></div>
<div class="a" style="left:991px;top:46px;width:30px;height:2px;background:#2b5b8c"></div>
<div class="a" style="left:991px;top:48px;width:29px;height:2px;background:#2b5b8c"></div>
<div class="a" style="left:976px;top:0;width:6px;height:652px;box-shadow:inset -6px 0 6px -6px #000"></div>
<div class="a" style="left:1095px;top:0;width:14px;height:652px;background:#1f1f1f;border-left:1px solid #181818"></div>
<div class="a" style="left:1096px;top:0;width:14px;height:41px;background:#242424"></div>
<div class="a" style="left:1095px;top:41px;width:14px;height:179px;background:#4a4a4a"></div>
<div class="a" style="left:1095px;top:83px;width:14px;height:2px;background:#a0a0a0"></div>
</div>

<!-- ============ STATUS BAR ============ -->
<div id="status">
<div class="a" style="left:0;top:-1px;width:34px;height:23px;background:#0078d4"></div>
<svg style="left:10px;top:3px" width="14" height="16" viewBox="0 0 14 16"><path d="M2.2 5.5L6.8 9.8 2.2 14.2M11.8 1.2L7.2 5.5 11.8 9.8" fill="none" stroke="#ffffff" stroke-width="1.25"/></svg>
<svg style="left:42px;top:4px" width="14" height="14" viewBox="0 0 14 14"><circle cx="7" cy="7" r="6" fill="none" stroke="#cccccc" stroke-width="1.1"/><path d="M4.5 4.5l5 5M9.5 4.5l-5 5" stroke="#cccccc" stroke-width="1.1"/></svg>
<div class="si" style="left:59px">0</div>
<svg style="left:69px;top:4px" width="14" height="13" viewBox="0 0 14 13"><path d="M7 1L.8 12.2h12.4z" fill="none" stroke="#cccccc" stroke-width="1.1" stroke-linejoin="round"/><path d="M7 5v3.8M7 10v1" stroke="#cccccc" stroke-width="1.1"/></svg>
<div class="si" style="left:86px">0</div>
<svg style="left:111px;top:4px" width="10" height="14" viewBox="0 0 10 14"><path d="M6 .7L1.5 7.5h4L3.5 13.3 8.8 6H4.8L7.5.7z" fill="none" stroke="#cccccc" stroke-width="1.05" stroke-linejoin="round"/></svg>
<div class="si" style="left:788.8px;letter-spacing:-0.25px">Ln 15, Col 1 (429 selected)</div>
<div class="si" style="left:942.8px;letter-spacing:-0.55px">Spaces: 4</div>
<div class="si" style="left:1007.0px;letter-spacing:-0.4px">UTF-8</div>
<div class="si" style="left:1055.0px;letter-spacing:-1.1px">CRLF</div>
<svg style="left:1099px;top:5px" width="12" height="13" viewBox="0 0 12 13"><path d="M3.5 1C2 1 2 2 2 3.5v1.5C2 6 1.4 6.5.5 6.5 1.4 6.5 2 7 2 8v1.5C2 11 2 12 3.5 12M8.5 1C10 1 10 2 10 3.5v1.5c0 1 .6 1.5 1.5 1.5-.9 0-1.5.5-1.5 1.5v1.5c0 1.5 0 2.5-1.5 2.5" fill="none" stroke="#cccccc" stroke-width="1.05"/></svg>
<div class="si" style="left:1117.0px;letter-spacing:-0.2px">Blade</div>
<svg style="left:1162px;top:4px" width="16" height="14" viewBox="0 0 16 14"><circle cx="5" cy="4" r="3" fill="none" stroke="#cccccc" stroke-width="1.4"/><circle cx="11" cy="4" r="3" fill="none" stroke="#cccccc" stroke-width="1.4"/><path d="M1.5 6.5v4c1.5 2 4 2.8 6.5 2.8s5-.8 6.5-2.8v-4" fill="none" stroke="#cccccc" stroke-width="1.4"/><path d="M6 8.5v2M10 8.5v2" stroke="#cccccc" stroke-width="1.4"/></svg>
<svg style="left:1193px;top:4px" width="13" height="14" viewBox="0 0 13 14"><circle cx="6.5" cy="6" r="1.6" fill="#cccccc"/><path d="M6.5 7.5v6" stroke="#cccccc" stroke-width="1.8"/><path d="M3.6 9A4 4 0 1 1 9.4 9M2 10.6a6 6 0 1 1 9 0" fill="none" stroke="#cccccc" stroke-width="1.1"/></svg>
<div class="si" style="left:1209.4px;letter-spacing:-0.2px">Go Live</div>
<svg style="left:1265px;top:4px" width="14" height="14" viewBox="0 0 14 14"><circle cx="7" cy="7" r="5.8" fill="none" stroke="#cccccc" stroke-width="1.1"/><path d="M2.9 11.1L11.1 2.9" stroke="#cccccc" stroke-width="1.1"/></svg>
<div class="si" style="left:1282.6px;letter-spacing:-0.2px">Prettier</div>
<svg style="left:1337px;top:4px" width="14" height="14" viewBox="0 0 14 14"><path d="M2.2 10.5h9.6l-1.3-1.8V5.8a3.5 3.5 0 0 0-7 0v2.9z" fill="none" stroke="#cccccc" stroke-width="1.1" stroke-linejoin="round"/><path d="M5.5 12.2a1.6 1.6 0 0 0 3 0" fill="none" stroke="#cccccc" stroke-width="1.1"/></svg>
</div>
<div id="blackbar"></div>
</body></html>
